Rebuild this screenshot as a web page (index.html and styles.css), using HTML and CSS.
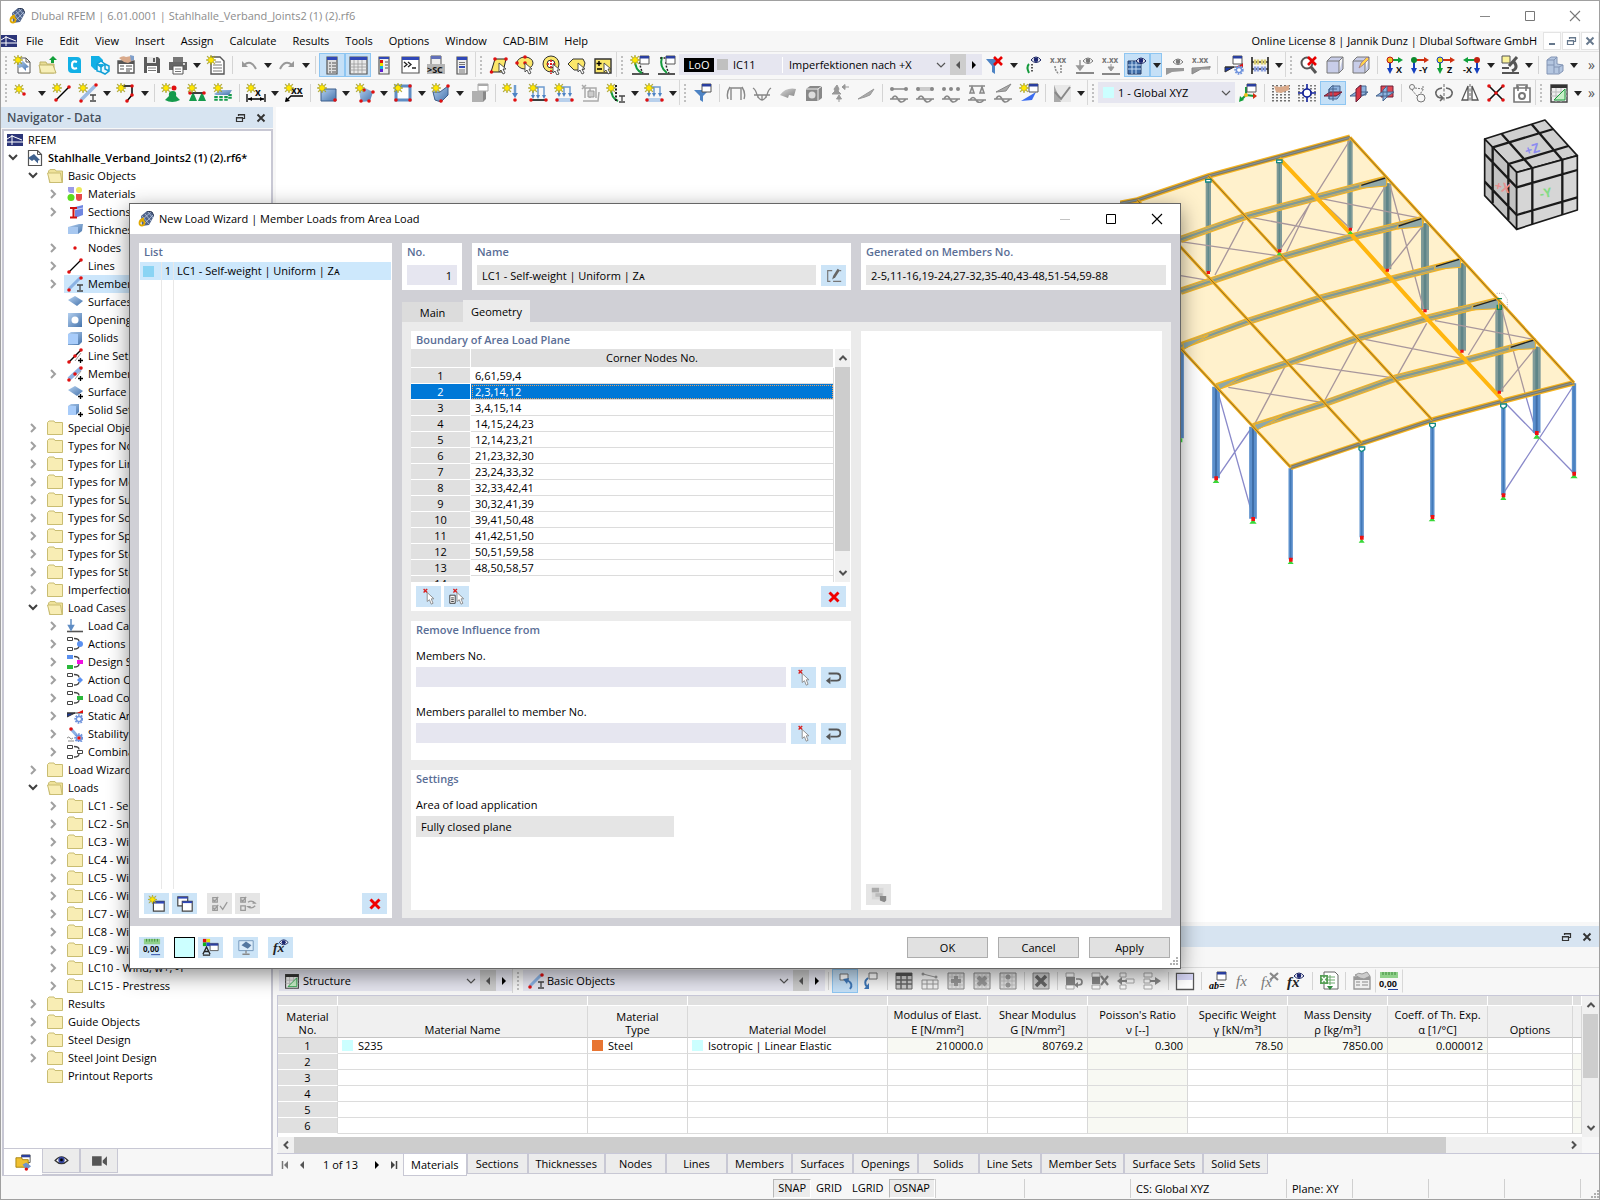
FILE: index.html
```html
<!DOCTYPE html>
<html lang="en">
<head>
<meta charset="utf-8">
<title>Dlubal RFEM</title>
<link rel="stylesheet" href="styles.css">
</head>
<body>
<svg class="sprite" aria-hidden="true">
<defs>
<linearGradient id="bl" x1="0" y1="0" x2="1" y2="1"><stop offset="0" stop-color="#b4d0f0"/><stop offset="1" stop-color="#4674ac"/></linearGradient>
<linearGradient id="gr" x1="0" y1="0" x2="1" y2="1"><stop offset="0" stop-color="#d8d8d8"/><stop offset="1" stop-color="#808080"/></linearGradient>
<g id="star"><path d="M5 0l1 3 3-2-2 3 3 1-3 1 2 3-3-2-1 3-1-3-3 2 2-3-3-1 3-1-2-3 3 2z" fill="#ffe600" stroke="#8f8a20" stroke-width=".5"/></g>
<circle id="dot" r="1.8" fill="#e01010"/>
<g id="win"><path d="M0 0h9v8H0z" fill="#fff" stroke="#555"/><path d="M0 0h9v2.500H0z" fill="#2a3f9e"/></g>
<g id="eye"><path d="M0 4q5-6 10 0q-5 5-10 0z" fill="#fff" stroke="#15205e"/><circle cx="5" cy="3.700" r="2.300" fill="#1b2570"/></g>
<g id="geye"><path d="M0 4q5-6 10 0q-5 5-10 0z" fill="#fff" stroke="#777"/><circle cx="5" cy="3.700" r="2.300" fill="#777"/></g>
<g id="cur"><path d="M0 0v9l2-2 2 4 2-1-2-4h3z" fill="#fff" stroke="#444" stroke-width=".9"/></g>
<g id="rx"><path d="M0 0l8 8M8 0l-8 8" stroke="#e80000" stroke-width="2.600"/></g>
<g id="ibeam"><path d="M0 0h6M3 0v5M0 6h6" stroke="#444" stroke-width="1.300"/></g>
<g id="gear"><circle r="3.600" fill="#fff" stroke="#6f93dc" stroke-width="2.200" stroke-dasharray="1.600 1"/><circle r="2.500" fill="none" stroke="#6f93dc" stroke-width="1.300"/></g>
<g id="plus"><path d="M2.500 0v5M0 2.500h5" stroke="#000" stroke-width="1.300"/></g>
</defs>
<symbol id="app" viewBox="0 0 16 16"><path d="M3 5l6-5 5 1 2 4-5 9-7 1z" fill="#50648c"/><path d="M4 5l7 8M7 3l6 7M10 1l5 6M4 9l9-8M6 13l9-9" stroke="#b8c6de" stroke-width=".8"/><path d="M9 0l5 1 2 4" stroke="#26324e" fill="none"/><path d="M6 7.500Q1.500 8.500 1.500 12a2.500 2.500 0 005 0 2.200 2.200 0 00-4.500-.5" fill="none" stroke="#e0a800" stroke-width="1.800"/></symbol>
<symbol id="rfem" viewBox="0 0 16 12"><path d="M0 0h16v12H0z" fill="#2b3478"/><path d="M0 8h16M5 1v10M0 5l5-3 10 4" stroke="#fff" fill="none"/></symbol>
<symbol id="chr" viewBox="0 0 16 16"><path d="M6 4l4 4-4 4" fill="none" stroke="#a0a0a0" stroke-width="2"/></symbol>
<symbol id="chd" viewBox="0 0 16 16"><path d="M4 5l4 4 4-4" fill="none" stroke="#404040" stroke-width="2"/></symbol>
<symbol id="thin" viewBox="0 0 10 10"><path d="M1 3l4 4 4-4" fill="none" stroke="#555" stroke-width="1.200"/></symbol>
<symbol id="up" viewBox="0 0 10 10"><path d="M1.500 7L5 3.500 8.500 7" fill="none" stroke="#505050" stroke-width="2"/></symbol>
<symbol id="dn" viewBox="0 0 10 10"><path d="M1.500 3L5 6.500 8.500 3" fill="none" stroke="#505050" stroke-width="2"/></symbol>
<symbol id="lf" viewBox="0 0 10 10"><path d="M7 1.500L3.500 5 7 8.500" fill="none" stroke="#505050" stroke-width="2"/></symbol>
<symbol id="rt" viewBox="0 0 10 10"><path d="M3 1.500L6.500 5 3 8.500" fill="none" stroke="#505050" stroke-width="2"/></symbol>
<symbol id="tl" viewBox="0 0 10 10"><path d="M7 1v8L3 5z" fill="#555"/></symbol>
<symbol id="tr" viewBox="0 0 10 10"><path d="M3 1v8l4-4z" fill="#000"/></symbol>
<symbol id="first" viewBox="0 0 10 10"><path d="M8 1v8L4 5z" fill="#777"/><path d="M2.500 1v8" stroke="#777" stroke-width="1.500"/></symbol>
<symbol id="last" viewBox="0 0 10 10"><path d="M2 1v8l4-4z" fill="#444"/><path d="M7.500 1v8" stroke="#444" stroke-width="1.500"/></symbol>
<symbol id="dd" viewBox="0 0 12 20"><path d="M2 8h8l-4 5z" fill="#222"/></symbol>
<symbol id="min" viewBox="0 0 12 12"><path d="M1 6.500h10" stroke="#888"/></symbol>
<symbol id="max" viewBox="0 0 12 12"><path d="M1.500 1.500h9v9h-9z" fill="none" stroke="currentColor"/></symbol>
<symbol id="cls" viewBox="0 0 12 12"><path d="M1 1l10 10M11 1L1 11" stroke="currentColor" stroke-width="1.100"/></symbol>
<symbol id="float" viewBox="0 0 12 12"><path d="M4.500 4V2.500h6v4H9M2.500 5.500h6v4h-6zM2.500 6h6M4.500 3h6" fill="none" stroke="currentColor" stroke-width="1.200"/></symbol>
<symbol id="bx" viewBox="0 0 12 12"><path d="M2.500 2.500l7 7M9.500 2.500l-7 7" stroke="currentColor" stroke-width="1.900"/></symbol>
<symbol id="bmin" viewBox="0 0 12 12"><path d="M3 9h6" stroke="currentColor" stroke-width="2"/></symbol>
<symbol id="grip" viewBox="0 0 10 10"><path d="M8 1h2v2H8zM5 4h2v2H5zM8 4h2v2H8zM2 7h2v2H2zM5 7h2v2H5zM8 7h2v2H8z" fill="#b0b0b0"/></symbol>
<!-- file and edit tools -->
<symbol id="new" viewBox="0 0 20 20"><path d="M6 3h8l4 4v11H6z" fill="#fff" stroke="#555"/><path d="M14 3v4h4" fill="none" stroke="#555"/><path d="M5 10l6-4 6 6-3 1v3l-4-4-3 1z" fill="url(#bl)"/><use href="#star" x="1" y="0"/></symbol>
<symbol id="open" viewBox="0 0 20 20"><path d="M2 7h6l1 2h7v9H2z" fill="#e8dc94" stroke="#bfb368"/><path d="M1 10h14l3 8H3z" fill="#f7efb8" stroke="#bfb368"/><path d="M13 8h3V5h3l-4-4-4 4h2z" fill="#11a03a"/></symbol>
<symbol id="cc" viewBox="0 0 20 20"><path d="M4 2h9q4 0 4 4v12H8q-4 0-4-4z" fill="#12b0e6"/><path d="M13 7q-5-2-5 3t5 3" fill="none" stroke="#fff" stroke-width="2.200"/></symbol>
<symbol id="hex" viewBox="0 0 20 20"><path d="M1 1h8l4 4v6l-4 4H5l-4-4z" fill="#12b0e6"/><path d="M7 9l4-3 4 3 4 2v5l-4 3-4-2-4-1zM7 9l4 3 4-3M11 12v5M15 9v5l4 2" fill="#e9f9ff" stroke="#12a0d6" stroke-width="1.500"/></symbol>
<symbol id="props" viewBox="0 0 20 20"><path d="M2 6h16v12H2z" fill="#fff" stroke="#555" stroke-width="1.400"/><path d="M2 6h16v3H2z" fill="#555"/><path d="M4 11h4M4 14h4M10 11h6M10 14h6M10 16h4" stroke="#888" stroke-width="1.500"/><path d="M3 3q4-3 7-1l5-1 3 4-6 3-4-1z" fill="#d9a98a"/><path d="M14 0l4 1v4l-3 1z" fill="#7fa0cc"/></symbol>
<symbol id="save" viewBox="0 0 20 20"><path d="M2 2h14l2 2v14H2z" fill="#5c5c5c"/><path d="M5 2h9v6H5z" fill="#e8e8e8"/><path d="M11 3h2v4h-2z" fill="#5c5c5c"/><path d="M5 11h10v7H5z" fill="#fff"/><path d="M6 13h8M6 15.500h8" stroke="#777"/></symbol>
<symbol id="print" viewBox="0 0 20 20"><path d="M5 2h10v5H5z" fill="#777"/><path d="M1 7h18v8H1z" fill="#666"/><path d="M5 11h10v8H5z" fill="#fff" stroke="#555"/><path d="M7 14h6M7 16.500h6" stroke="#777"/><circle cx="16" cy="9" r="1" fill="#fff"/></symbol>
<symbol id="doc" viewBox="0 0 20 20"><path d="M5 2h9l4 4v13H5z" fill="#fff" stroke="#555" stroke-width="1.400"/><path d="M9 7h6M7 10h9M7 13h9M7 16h9" stroke="#777"/><use href="#star"/></symbol>
<symbol id="undo" viewBox="0 0 20 20"><path d="M3 6v6h6z" fill="#999"/><path d="M5 10q7-6 12 4" fill="none" stroke="#999" stroke-width="2"/></symbol>
<symbol id="redo" viewBox="0 0 20 20"><path d="M17 6v6h-6z" fill="#999"/><path d="M15 10q-7-6-12 4" fill="none" stroke="#999" stroke-width="2"/></symbol>
<symbol id="nav" viewBox="0 0 20 20"><path d="M5 2h10v17H5z" fill="#ddd" stroke="#555" stroke-width="1.200"/><path d="M5 2h10v3H5z" fill="#3048b8"/><path d="M7 8h2M10 8h4M7 11h2M10 11h4M7 14h2M10 14h4M7 17h2M10 17h4" stroke="#555"/></symbol>
<symbol id="grid" viewBox="0 0 20 20"><path d="M2 2h17v17H2z" fill="#e9e9e9" stroke="#555" stroke-width="1.200"/><path d="M2 2h17v3H2z" fill="#3048b8"/><path d="M2 9h17M2 12h17M2 15h17M6 5v14M10 5v14M14 5v14" stroke="#999" stroke-width=".8"/></symbol>
<symbol id="colors" viewBox="0 0 20 20"><path d="M5 2h10v17H5z" fill="#eee" stroke="#555" stroke-width="1.200"/><path d="M5 2h10v2H5z" fill="#3048b8"/><path d="M6 5h3v3H6z" fill="#e01010"/><path d="M6 8h3v3H6z" fill="#e8e000"/><path d="M6 11h3v3H6z" fill="#10b0e0"/><path d="M6 14h3v3H6z" fill="#6020d0"/><path d="M11 7h3M11 10h3M11 13h3" stroke="#555"/></symbol>
<symbol id="cons" viewBox="0 0 20 20"><path d="M2 2h17v16H2z" fill="#fff" stroke="#555" stroke-width="1.200"/><path d="M2 2h17v3H2z" fill="#3048b8"/><path d="M4 7l3 2.500L4 12M8 7l3 2.500L8 12M12 13h4" fill="none" stroke="#222" stroke-width="1.300"/></symbol>
<symbol id="sc" viewBox="0 0 20 20"><path d="M5 1h10v11H5z" fill="#eee" stroke="#555"/><path d="M5 1h10v3H5z" fill="#6270b8"/><rect x="1" y="9" width="18" height="10" fill="#b4b4b4"/><text x="1" y="18" font-size="9" class="bt">&gt;SC</text></symbol>
<symbol id="list" viewBox="0 0 20 20"><path d="M5 2h10v17H5z" fill="#eee" stroke="#555" stroke-width="1.200"/><path d="M5 2h10v3H5zM7 11h6v2H7z" fill="#3048b8"/><path d="M7 7.500h6M7 9.500h6M7 15h6M7 17h6" stroke="#777"/></symbol>
<!-- selection tools -->
<symbol id="s1" viewBox="0 0 20 20"><path d="M6 4h11l-3 13H2z" fill="#fbe76a" stroke="#222"/><use href="#dot" x="6" y="4"/><use href="#dot" x="17" y="4"/><use href="#dot" x="2.500" y="17"/><use href="#cur" x="10" y="8"/></symbol>
<symbol id="s2" viewBox="0 0 20 20"><ellipse cx="10" cy="8" rx="8" ry="6" fill="#fbe76a" stroke="#333"/><use href="#dot" x="10" y="2"/><use href="#dot" x="2" y="8"/><use href="#dot" x="10" y="8"/><use href="#cur" x="10" y="8"/></symbol>
<symbol id="s3" viewBox="0 0 20 20"><circle cx="10" cy="9" r="8" fill="#fbe76a" stroke="#333"/><circle cx="10" cy="9" r="4" fill="#fff" stroke="#333"/><path d="M10 5v8M6 9h8M10 15v4" stroke="#e01010" stroke-width="1.600" stroke-dasharray="2 1"/><use href="#cur" x="12" y="9"/></symbol>
<symbol id="s4" viewBox="0 0 20 20"><path d="M6 4h10l2 4-2 7H7l-6-6z" fill="#fbe76a" stroke="#333"/><use href="#cur" x="11" y="8"/></symbol>
<symbol id="s5" viewBox="0 0 20 20"><path d="M2 4h16v14H2z" fill="#fbe76a" stroke="#333" stroke-width="1.400"/><path d="M6 6v5M3.500 8.500h5M4 14h5" stroke="#000" stroke-width="1.400"/><use href="#cur" x="11" y="8"/></symbol>
<symbol id="ld1" viewBox="0 0 20 20"><path d="M2 19h17" stroke="#555" stroke-width="2"/><path d="M5 5q0 10 7 13" fill="none" stroke="#159a3c" stroke-width="2"/><path d="M10 7q0 6 3 11" fill="none" stroke="#222" stroke-dasharray="2 1.500" stroke-width="1.500"/><use href="#win" x="10" y="1"/><use href="#star"/></symbol>
<symbol id="ld2" viewBox="0 0 20 20"><path d="M2 19h17" stroke="#555" stroke-width="2"/><path d="M6 2q-3 10 5 16" fill="none" stroke="#159a3c" stroke-width="2"/><path d="M10 7q0 6 3 11M4 3h6" fill="none" stroke="#222" stroke-dasharray="2 1.500" stroke-width="1.500"/><use href="#win" x="10" y="1"/></symbol>
<symbol id="filx" viewBox="0 0 20 20"><path d="M1 4h15l-6 7v8l-3-2v-6z" fill="#4d83c4"/><use href="#rx" x="9" y="2"/></symbol>
<symbol id="gef" viewBox="0 0 20 20"><path d="M6 9q-3 3 0 9" fill="none" stroke="#159a3c" stroke-width="2"/><path d="M9 9v9" stroke="#222" stroke-dasharray="1.500 1.500" stroke-width="1.500"/><use href="#eye" x="8" y="1"/></symbol>
<symbol id="xg" viewBox="0 0 20 20"><text x="1" y="8" font-size="8" class="gt">x.xx</text><path d="M6 11q0 5 4 8M12 10v9" fill="none" stroke="#888" stroke-dasharray="2 1" stroke-width="1.500"/></symbol>
<symbol id="ea" viewBox="0 0 20 20"><path d="M1 18h18" stroke="#888" stroke-width="2"/><path d="M5 5v8M2 11l3 4 3-4z" stroke="#999" fill="#999" stroke-width="1.500"/><use href="#geye" x="8" y="2"/></symbol>
<symbol id="xa" viewBox="0 0 20 20"><text x="1" y="8" font-size="8" class="gt">x.xx</text><path d="M1 19h18" stroke="#888" stroke-width="2"/><path d="M10 9v5M7 12l3 4 3-4z" stroke="#999" fill="#999"/></symbol>
<symbol id="mesh" viewBox="0 0 20 20"><path d="M1 6h13v13H1z" fill="#3f6da8" stroke="#2a3f66"/><path d="M1 10h13M1 14h13M5 6v13M9 6v13" stroke="#c4dcf4"/><use href="#eye" x="9" y="2"/></symbol>
<symbol id="ew" viewBox="0 0 20 20"><path d="M1 13h18v3l-12 1-6 3z" fill="#999"/><use href="#geye" x="8" y="3"/></symbol>
<symbol id="xw" viewBox="0 0 20 20"><text x="1" y="8" font-size="8" class="gt">x.xx</text><path d="M1 13h18v-2M1 13v6l9-5h9" fill="#999" stroke="#888"/></symbol>
<symbol id="rd" viewBox="0 0 20 20"><path d="M1 12h18M1 12v5l9-5z" fill="#1c3aa8" stroke="#333"/><path d="M12 12l7-4v4z" fill="#e01010"/><use href="#win" x="9" y="1"/><use href="#gear" x="15" y="15"/></symbol>
<symbol id="abac" viewBox="0 0 20 20"><path d="M2 2v17M18 2v17M2 7h16M2 14h16" stroke="#222" stroke-width="1.600"/><path d="M5 4.500v5M8 4.500v5M12 4.500v5M15 4.500v5" stroke="#d8cc70" stroke-width="2.400"/><path d="M5 11.500v5M8 11.500v5M12 11.500v5M15 11.500v5" stroke="#8ca0e0" stroke-width="2.400"/></symbol>
<!-- view tools -->
<symbol id="magx" viewBox="0 0 20 20"><circle cx="8" cy="8" r="5.500" fill="#fff" stroke="#555" stroke-width="2"/><path d="M12 12l5 6" stroke="#555" stroke-width="3"/><use href="#rx" x="9" y="2"/></symbol>
<symbol id="cube" viewBox="0 0 20 20"><path d="M2 6h12v12H2zM2 6l4-4h12l-4 4M14 18l4-4V2" fill="#c8cde8" stroke="#777"/></symbol>
<symbol id="cubep" viewBox="0 0 20 20"><path d="M2 6h12v12H2zM2 6l4-4h12l-4 4M14 18l4-4V2" fill="#c8cde8" stroke="#777"/><path d="M8 13l2-5 6-6 2 2-6 6z" fill="#ffd24a" stroke="#a88"/></symbol>
<symbol id="vx" viewBox="0 0 20 20"><path d="M6 5v9" stroke="#1540c0" stroke-width="2"/><path d="M3 13h6l-3 6z" fill="#1540c0"/><path d="M8 5h6" stroke="#11a03a" stroke-width="2"/><path d="M14 2v6l5-3z" fill="#11a03a"/><circle cx="6" cy="5" r="3" fill="#f0c020" stroke="#c01010"/><text x="12" y="18" font-size="9" class="bt">X</text></symbol>
<symbol id="vy" viewBox="0 0 20 20"><path d="M4 5v9" stroke="#1540c0" stroke-width="2"/><path d="M1 13h6l-3 6z" fill="#1540c0"/><path d="M6 5h8" stroke="#d03010" stroke-width="2"/><path d="M14 2v6l5-3z" fill="#d03010"/><circle cx="4" cy="5" r="3" fill="#0d8a2e"/><text x="9" y="18" font-size="9" class="bt">-Y</text></symbol>
<symbol id="vz" viewBox="0 0 20 20"><path d="M4 5v9" stroke="#11a03a" stroke-width="2"/><path d="M1 13h6l-3 6z" fill="#11a03a"/><path d="M6 5h8" stroke="#d03010" stroke-width="2"/><path d="M14 2v6l5-3z" fill="#d03010"/><circle cx="4" cy="5" r="3" fill="#f0e020" stroke="#1540c0"/><text x="11" y="18" font-size="9" class="bt">Z</text></symbol>
<symbol id="vmx" viewBox="0 0 20 20"><path d="M15 5v9" stroke="#1540c0" stroke-width="2"/><path d="M12 13h6l-3 6z" fill="#1540c0"/><path d="M6 5h8" stroke="#11a03a" stroke-width="2"/><path d="M6 2v6L1 5z" fill="#11a03a"/><circle cx="15" cy="5" r="3" fill="#c02010"/><text x="1" y="18" font-size="9" class="bt">-X</text></symbol>
<symbol id="micro" viewBox="0 0 20 20"><path d="M2 1h8v7H2z" fill="#fbf39a" stroke="#555"/><path d="M17 2l-8 9M14 7q5 6-2 9" stroke="#555" stroke-width="3" fill="none"/><path d="M2 12h7v2H2zM2 17h17v2H2z" fill="#555"/></symbol>
<symbol id="cubes" viewBox="0 0 20 20"><path d="M2 5l4-3h6v7l6 1v6l-4 3H2z" fill="#b4c6e0" stroke="#8294b4"/><path d="M2 10h7v8M2 5h7l3-3M9 5v5M14 12v6M9 12h5l4-2" fill="none" stroke="#8294b4"/></symbol>
<!-- modelling tools -->
<symbol id="node" viewBox="0 0 20 20"><use href="#star" x="2" y="1"/><use href="#dot" x="12" y="11"/></symbol>
<symbol id="line" viewBox="0 0 20 20"><path d="M4 17L17 4" stroke="#000" stroke-width="1.500"/><use href="#dot" x="4" y="17"/><use href="#dot" x="17" y="4"/><use href="#star"/></symbol>
<symbol id="member" viewBox="0 0 20 20"><path d="M3 17L17 3" stroke="#9cbce4" stroke-width="3.500"/><use href="#dot" x="3" y="18"/><use href="#dot" x="18" y="2"/><use href="#ibeam" x="12" y="12"/><use href="#star"/></symbol>
<symbol id="poly" viewBox="0 0 20 20"><path d="M6 3h10v9l-5 6" fill="none" stroke="#000" stroke-width="1.500"/><use href="#dot" x="16" y="3"/><use href="#dot" x="16" y="12"/><use href="#dot" x="11" y="18"/><use href="#star"/></symbol>
<symbol id="sup" viewBox="0 0 20 20"><path d="M12 8q4 0 3 5l4 4q-8 4-15 0l4-4q-1-5 4-5z" fill="#159a4c"/><circle cx="13" cy="5" r="2.500" fill="#e01010"/><use href="#star"/></symbol>
<symbol id="sup2" viewBox="0 0 20 20"><path d="M2 10h16" stroke="#000" stroke-width="1.500"/><path d="M5 11h2l3 7H2zM14 11h2l3 7h-8z" fill="#159a4c"/><use href="#dot" x="3" y="10"/><use href="#dot" x="17" y="10"/><use href="#star"/></symbol>
<symbol id="sup3" viewBox="0 0 20 20"><path d="M3 13v5M8 13v5M13 13v5M17 11v5" stroke="#159a4c" stroke-width="3.500" stroke-dasharray="2 .8"/><path d="M1 11l6-4h12l-3 5H3z" fill="url(#bl)"/><use href="#star"/></symbol>
<symbol id="dimx" viewBox="0 0 20 20"><path d="M1 11v8M19 11v8M2 16h16" stroke="#000" stroke-width="1.300"/><path d="M2 16l4-2v4zM18 16l-4-2v4z"/><text x="9" y="13" font-size="10" class="bt">x</text><use href="#star"/></symbol>
<symbol id="dimxx" viewBox="0 0 20 20"><path d="M2 18l5-5h12" stroke="#000" stroke-width="1.300" fill="none"/><path d="M1 19l1-5 4 4z"/><text x="7" y="11" font-size="10" class="bt">xx</text><use href="#star"/></symbol>
<symbol id="surf" viewBox="0 0 20 20"><path d="M4 6h15v12H4z" fill="url(#bl)" stroke="#3d5f8c"/><use href="#dot" x="18" y="17"/><use href="#star"/></symbol>
<symbol id="surf2" viewBox="0 0 20 20"><path d="M4 8l6-3 8 4-3 9-9 1z" fill="url(#bl)"/><use href="#dot" x="9" y="7"/><use href="#dot" x="18" y="9"/><use href="#dot" x="6" y="18"/><use href="#dot" x="14" y="18"/><use href="#star"/></symbol>
<symbol id="opn" viewBox="0 0 20 20"><path d="M3 3h14v14H3z" fill="#fff" stroke="#5f8dc4" stroke-width="3"/><use href="#dot" x="17" y="3"/><use href="#dot" x="3" y="17"/><use href="#dot" x="17" y="17"/><use href="#star"/></symbol>
<symbol id="sol" viewBox="0 0 20 20"><path d="M2 9h7l8-6v9l-7 7-6-2z" fill="url(#bl)" stroke="#3d5f8c"/><use href="#dot" x="17" y="3"/><use href="#dot" x="10" y="18"/><use href="#star"/></symbol>
<symbol id="gbox" viewBox="0 0 20 20"><path d="M3 8h11v11H3z" fill="#b0b0b0"/><path d="M14 8l3-3v11l-3 3z" fill="#888"/><path d="M9 1h10v7H9z" fill="#fff" stroke="#aaa"/><path d="M9 1h10v2H9z" fill="#aaa"/></symbol>
<symbol id="nl" viewBox="0 0 20 20"><path d="M13 2v9" stroke="#6f9cd0" stroke-width="2.500"/><path d="M10 10h6l-3 5z" fill="#4d83c4"/><use href="#dot" x="13" y="17"/><use href="#star"/></symbol>
<symbol id="ll" viewBox="0 0 20 20"><path d="M3 17h15" stroke="#000" stroke-width="1.500"/><path d="M5 14V4h11v10M10 4v10" stroke="#6f9cd0" fill="none" stroke-width="1.500"/><path d="M3 12h4l-2 4zM8 12h4l-2 4zM14 12h4l-2 4z" fill="#4d83c4"/><use href="#dot" x="3" y="17"/><use href="#dot" x="18" y="17"/><use href="#star"/></symbol>
<symbol id="al" viewBox="0 0 20 20"><path d="M2 15h16v4H2z" fill="#b8d0ec"/><path d="M5 12V4h11v8M10 4v8" stroke="#6f9cd0" fill="none" stroke-width="1.500"/><path d="M3 10h4l-2 4zM8 10h4l-2 4zM14 10h4l-2 4z" fill="#4d83c4"/><use href="#dot" x="3" y="17"/><use href="#dot" x="18" y="17"/><use href="#star"/></symbol>
<symbol id="gl" viewBox="0 0 20 20"><path d="M3 18h15l1-9M5 15V5h11v10M10 5v10M2 2l4 4M6 2L2 6" stroke="#aaa" fill="none" stroke-width="1.500"/><path d="M8 8h6v6H8z" fill="#ccc" stroke="#999"/></symbol>
<symbol id="imp" viewBox="0 0 20 20"><path d="M5 5q0 10 7 13" fill="none" stroke="#159a3c" stroke-width="2"/><path d="M10 2v16" stroke="#222" stroke-dasharray="2 1.500" stroke-width="2"/><use href="#ibeam" x="13" y="13"/><use href="#star"/></symbol>
<symbol id="fil" viewBox="0 0 20 20"><path d="M1 7h15l-6 6v6l-3-2v-4z" fill="#4d83c4"/><use href="#win" x="9" y="1"/></symbol>
<!-- results tools -->
<symbol id="g1" viewBox="0 0 20 20"><path d="M5 17V5h10v12M2 16q-2-6 2-12M16 4q4 6 2 12" fill="none" stroke="#888" stroke-width="1.400"/></symbol>
<symbol id="g2" viewBox="0 0 20 20"><path d="M1 5q3 2 4 7M19 5q-3 2-4 7M2 12h16M5 12q5 10 10 0M6 12v3M10 12v5M14 12v3" fill="none" stroke="#888" stroke-width="1.300"/></symbol>
<symbol id="g3" viewBox="0 0 20 20"><path d="M2 12q6-8 16-6l-2 7-5-1-1 3z" fill="url(#gr)"/></symbol>
<symbol id="g4" viewBox="0 0 20 20"><path d="M2 6l4-3h12v12l-4 3H2z" fill="#888"/><path d="M2 6h12v12M14 6l4-3" fill="none" stroke="#eee"/><circle cx="8" cy="12" r="3.500" fill="#ddd"/></symbol>
<symbol id="g5" viewBox="0 0 20 20"><path d="M7 2l2 4-1 2 3 3H2l3-3-1-2zM12 4h7M12 4l3-2.500v5zM9 19v-5M9 12l-2.500 4h5z" fill="#999" stroke="#999"/></symbol>
<symbol id="g6" viewBox="0 0 20 20"><path d="M2 16L18 6l-4 6-5 2z" fill="#aaa" stroke="#999"/></symbol>
<symbol id="w1" viewBox="0 0 20 20"><path d="M2 6h16M1 16h18M3 16q3-6 6 0t8 0" fill="none" stroke="#888" stroke-width="1.700"/><circle cx="3" cy="6" r="2" fill="#888"/><circle cx="17" cy="6" r="2" fill="#888"/></symbol>
<symbol id="w2" viewBox="0 0 20 20"><path d="M2 6h16" stroke="#ccc" stroke-width="4"/><path d="M1 16h18M3 16q3-6 6 0t8 0" fill="none" stroke="#888" stroke-width="1.700"/><circle cx="3" cy="6" r="2" fill="#888"/><circle cx="17" cy="6" r="2" fill="#888"/></symbol>
<symbol id="w3" viewBox="0 0 20 20"><path d="M1 16h18M3 16q3-6 6 0t8 0" fill="none" stroke="#888" stroke-width="1.700"/><circle cx="3" cy="6" r="2" fill="#888"/><circle cx="10" cy="6" r="2" fill="#888"/><circle cx="17" cy="6" r="2" fill="#888"/></symbol>
<symbol id="w4" viewBox="0 0 20 20"><path d="M2 3h16M1 17h18M3 17q3-5 6 0t8 0M3 10l2-6 2 6zM13 10l2-6 2 6z" fill="none" stroke="#888" stroke-width="1.600"/></symbol>
<symbol id="w5" viewBox="0 0 20 20"><path d="M3 9L18 1l-5 7z" fill="#aaa" stroke="#888"/><path d="M1 16h18M3 16q3-6 6 0t8 0" fill="none" stroke="#888" stroke-width="1.700"/></symbol>
<symbol id="w6" viewBox="0 0 20 20"><path d="M2 18l15-9-4 8z" fill="#3a6cf0"/><use href="#win" x="10" y="1"/><use href="#star"/></symbol>
<symbol id="g7" viewBox="0 0 20 20"><path d="M2 2h17v17H2z" fill="#e8e8e8"/><path d="M2 2l7 17H2z" fill="#aaa"/><path d="M3 9l6 7L18 4" fill="none" stroke="#888" stroke-width="2"/></symbol>
<symbol id="cs" viewBox="0 0 20 20"><path d="M8 12V4M8 12l8 1M8 12l-5 5" stroke="#159a3c" stroke-width="2"/><path d="M15 10v6l4-3z" fill="#d03010"/><path d="M1 19l1-6 4 4z" fill="#11a03a"/><circle cx="8" cy="12" r="2" fill="#f0c020"/><use href="#win" x="9" y="1"/></symbol>
<symbol id="gs1" viewBox="0 0 20 20"><path d="M2 2v17M6 2v17M10 2v17M14 2v17M18 2v17" stroke="#444" stroke-width="1.500" stroke-dasharray="1.500 1.500"/><path d="M3 3l6 1 9-2v5l-8 3-5-1z" fill="#d9a98a"/></symbol>
<symbol id="gs2" viewBox="0 0 20 20"><path d="M2 2v17M6 2v17M14 2v17M18 2v17" stroke="#555" stroke-width="1.500" stroke-dasharray="1.500 1.500"/><path d="M10 1v18M1 10h18" stroke="#10209a" stroke-width="1.600"/><circle cx="10" cy="10" r="4" fill="#fff" stroke="#10209a" stroke-width="1.600"/></symbol>
<symbol id="p1" viewBox="0 0 20 20"><path d="M6 6l3-3h8v9l-3 4H6z" fill="#8fb4e0" stroke="#46648e"/><path d="M1 13l6-4h12l-6 4z" fill="#d83848" stroke="#6a2038"/><path d="M10 2v16M6 16V6h8" stroke="#46648e" fill="none"/></symbol>
<symbol id="p2" viewBox="0 0 20 20"><path d="M1 13l6-4h12l-6 4zM10 3h7v9h-7z" fill="#8fb4e0" stroke="#46648e"/><path d="M7 6l5-4v12l-5 5z" fill="#d83848" stroke="#6a2038"/></symbol>
<symbol id="p3" viewBox="0 0 20 20"><path d="M6 3h12v11H6z" fill="#e04854" stroke="#6a2038"/><path d="M1 13l6-4h12l-6 4zM8 7l4-4v11l-4 4z" fill="#8fb4e0" stroke="#46648e"/></symbol>
<symbol id="o1" viewBox="0 0 20 20"><circle cx="4" cy="4" r="2.500" fill="none" stroke="#777"/><circle cx="13" cy="15" r="4" fill="none" stroke="#777"/><path d="M7 5l8 1M15 3v4l-3 4M4 7l5 6" stroke="#777" fill="none" stroke-dasharray="2 1"/></symbol>
<symbol id="o2" viewBox="0 0 20 20"><path d="M10 1v18" stroke="#666" stroke-dasharray="3 1.500"/><path d="M8 5q-7 1-6 6 1 4 6 4M12 5q7 1 6 6-1 4-6 4M6 12l3 3-3 3" fill="none" stroke="#666" stroke-width="1.600"/></symbol>
<symbol id="o3" viewBox="0 0 20 20"><path d="M10 1v18" stroke="#666" stroke-dasharray="3 1.500"/><path d="M8 3v14H2zM12 3v14h6z" fill="#fff" stroke="#555" stroke-width="1.300"/></symbol>
<symbol id="o4" viewBox="0 0 20 20"><path d="M3 3l14 14M17 3L3 17" stroke="#111" stroke-width="1.600"/><use href="#dot" x="3" y="3"/><use href="#dot" x="17" y="3"/><use href="#dot" x="10" y="10"/><use href="#dot" x="3" y="17"/><use href="#dot" x="17" y="17"/></symbol>
<symbol id="o5" viewBox="0 0 20 20"><path d="M2 5h16v14H2zM5 5V2h10v3M6 3v5M14 3v5" fill="#fff" stroke="#777" stroke-width="1.600"/><circle cx="10" cy="13" r="3" fill="#fff" stroke="#777" stroke-width="2"/></symbol>
<symbol id="tri" viewBox="0 0 20 20"><path d="M2 2h16v17H2z" fill="#eee" stroke="#444" stroke-width="1.400"/><path d="M2 2h16v3H2z" fill="#333"/><path d="M2 9h16M2 13h16M7 5v14M12 5v14" stroke="#bbb"/><path d="M16 6v11H5z" fill="#c8f0c8" stroke="#1b9a3c"/></symbol>
<!-- tree icons -->
<symbol id="fo" viewBox="0 0 16 16"><path d="M.5 2.500L2 1h5l1 1.500h7.500v12H.5z" fill="#f8edb4" stroke="#c9bd72"/></symbol>
<symbol id="foo" viewBox="0 0 16 16"><path d="M1.500 3L3 1.500h5L9 3h6.500v11.500h-13z" fill="#efe29a" stroke="#c9bd72"/><path d="M.5 5h13l1.500 9.500H3z" fill="#f8edb4" stroke="#c9bd72"/></symbol>
<symbol id="file" viewBox="0 0 16 16"><path d="M1.500.5h9l4 4v11h-13z" fill="#fff" stroke="#555" stroke-width="1.200"/><path d="M10.500.5v4h4" fill="none" stroke="#555"/><path d="M1 8l6-4 6 6-2 .5v3l-4-4-2 1.500z" fill="#3f628f"/></symbol>
<symbol id="mat" viewBox="0 0 16 16"><path d="M1 1h6v6H4a3 3 0 01-3-3z" fill="#9c9ce8"/><circle cx="12" cy="4" r="3" fill="#ece85c"/><circle cx="4" cy="11.500" r="3.500" fill="#5ddc1c"/><path d="M9 8h6v4a3 3 0 01-6 0z" fill="#e84848"/></symbol>
<symbol id="sec" viewBox="0 0 16 16"><path d="M8 3l8-2v10l-8 3z" fill="#6f86e0"/><path d="M7 6l9-2" stroke="#ccd4f8"/><path d="M3 4h7M6.500 4v9M3 13.500h7" stroke="#d01010" stroke-width="2"/></symbol>
<symbol id="thk" viewBox="0 0 16 16"><path d="M1 5l11-3h4l-1 7-4 3H1z" fill="url(#bl)"/><path d="M1 5h10v7H1z" fill="#a8c8f0"/></symbol>
<symbol id="nd" viewBox="0 0 16 16"><circle cx="8" cy="8" r="1.700" fill="#e01010"/></symbol>
<symbol id="ln" viewBox="0 0 16 16"><path d="M2 14L14 2" stroke="#000" stroke-width="1.300"/><use href="#dot" x="2" y="14"/><use href="#dot" x="14" y="2"/></symbol>
<symbol id="mb" viewBox="0 0 16 16"><path d="M2 13L13 2" stroke="#8ab2e4" stroke-width="3"/><use href="#dot" x="2" y="14"/><use href="#dot" x="14" y="2"/><use href="#ibeam" x="10" y="9"/></symbol>
<symbol id="sf" viewBox="0 0 16 16"><path d="M1 6l7-4 8 5-6 5z" fill="url(#bl)"/></symbol>
<symbol id="op" viewBox="0 0 16 16"><path d="M1 1h14v14H1z" fill="url(#bl)"/><circle cx="8" cy="8" r="3.500" fill="#fff"/></symbol>
<symbol id="sd" viewBox="0 0 16 16"><path d="M1 4l3-2h11v10l-3 3H1z" fill="url(#bl)"/><path d="M1 4h10v10H1z" fill="#a8ccfa"/></symbol>
<symbol id="ls" viewBox="0 0 16 16"><path d="M2 14L14 2" stroke="#000" stroke-width="1.500"/><path d="M8 13l6-8" stroke="#999"/><use href="#dot" x="2" y="14"/><use href="#dot" x="8" y="8"/><use href="#dot" x="14" y="2"/><use href="#plus" x="11" y="10"/></symbol>
<symbol id="ms" viewBox="0 0 16 16"><path d="M2 13L14 2" stroke="#8cb0e4" stroke-width="4"/><path d="M8 13l6-8" stroke="#999"/><use href="#dot" x="2" y="14"/><use href="#dot" x="8" y="8"/><use href="#dot" x="14" y="2"/><use href="#plus" x="11" y="10"/></symbol>
<symbol id="ss" viewBox="0 0 16 16"><path d="M1 6l7-4 8 5-6 5z" fill="url(#bl)"/><use href="#plus" x="11" y="10"/></symbol>
<symbol id="sds" viewBox="0 0 16 16"><path d="M1 4l3-2h8v8l-3 3H1z" fill="url(#bl)"/><path d="M1 4h8v9H1z" fill="#a8ccfa"/><use href="#plus" x="11" y="10"/></symbol>
<symbol id="lc" viewBox="0 0 16 16"><path d="M0 13.500h16" stroke="#555" stroke-width="1.600"/><path d="M4 1v8M1.500 7.500L4 12l2.500-4.500z" stroke="#5f8dc4" fill="#5f8dc4" stroke-width="1.500"/></symbol>
<g id="cb"><path d="M.5 1.500h5v3h-5zM.5 11.500h5v3h-5z" fill="#fff" stroke="#444"/><path d="M7 2.500q5 0 5 3M7 13q5 0 5-3" fill="none" stroke="#444" stroke-width="1.300"/></g>
<symbol id="ac" viewBox="0 0 16 16"><use href="#cb"/><circle cx="13" cy="8" r="3" fill="#5a90f0"/></symbol>
<symbol id="ds" viewBox="0 0 16 16"><use href="#cb"/><path d="M0 1h6v4H0z" fill="#5a90f0"/><path d="M0 11h6v4H0z" fill="#2ab83a"/><path d="M10 6h6v4h-6z" fill="#f010e0"/></symbol>
<symbol id="acc" viewBox="0 0 16 16"><use href="#cb"/><path d="M13 5l3 3-3 3-3-3z" fill="#5a90f0"/></symbol>
<symbol id="loc" viewBox="0 0 16 16"><use href="#cb"/><path d="M10 6h6v4h-6z" fill="#2ab83a"/></symbol>
<symbol id="cmb" viewBox="0 0 16 16"><use href="#cb"/><path d="M10.500 6.500h5v3h-5z" fill="#fff" stroke="#444"/></symbol>
<symbol id="sta" viewBox="0 0 16 16"><path d="M0 5h16M0 5v4l8-4z" fill="#1c3a98" stroke="#333"/><path d="M10 5l6-3v3z" fill="#e01010"/><use href="#gear" x="12" y="11"/></symbol>
<symbol id="stb" viewBox="0 0 16 16"><path d="M4 3l8 9" stroke="#8cb0e4" stroke-width="3"/><path d="M0 12q2-2 3 0t3 0M1 15h6" stroke="#888" fill="none"/><use href="#gear" x="12" y="12"/><use href="#dot" x="4" y="3"/><use href="#dot" x="12" y="12"/></symbol>
<symbol id="t1" viewBox="0 0 18 18"><use href="#win" x="7" y="1"/><path d="M1 4h6l1 2h6v8H1z" fill="#f0c030" stroke="#a88410"/><path d="M8 11l4-2 5 4-5 4z" fill="#6f93cc"/><use href="#dot" x="12" y="16"/></symbol>
<symbol id="t2" viewBox="0 0 16 16"><path d="M2 8q6-7 12 0-6 6-12 0z" fill="#fff" stroke="#333" stroke-width="1.200"/><circle cx="8" cy="7.500" r="3" fill="#34449c"/><circle cx="8" cy="7.500" r="1.300" fill="#000"/></symbol>
<symbol id="t3" viewBox="0 0 16 16"><path d="M1 4h9v9H1zM11 8l4-4v9l-4-3z" fill="#555"/></symbol>
<!-- dialog tools -->
<symbol id="dn1" viewBox="0 0 20 20"><path d="M6 7h12v11H6z" fill="#fff" stroke="#444" stroke-width="1.300"/><path d="M6 7h12v2.500H6z" fill="#3048b8"/><use href="#star"/></symbol>
<symbol id="dn2" viewBox="0 0 20 20"><path d="M2 2h11v10H2z" fill="#fff" stroke="#444" stroke-width="1.300"/><path d="M2 2h11v2H2z" fill="#3048b8"/><path d="M7 7h11v11H7z" fill="#fff" stroke="#444" stroke-width="1.300"/><path d="M7 7h11v2H7z" fill="#3048b8"/></symbol>
<symbol id="dc1" viewBox="0 0 20 20"><path d="M2 3h5v5H2zM2 12h5v5H2zM3 5l1 2 4-5M3 14l1 2 4-5M10 12l3 4 5-8" fill="none" stroke="#999" stroke-width="1.400"/></symbol>
<symbol id="dc2" viewBox="0 0 20 20"><path d="M2 3h5v5H2zM2 12h5v5H2zM3 5l1 2 4-5M10 8q4-3 8 1l-3 0M18 12q-4 4-8 1l3 0" fill="none" stroke="#999" stroke-width="1.400"/></symbol>
<symbol id="del" viewBox="0 0 20 20"><path d="M5 5l10 10M15 5L5 15" stroke="#f00000" stroke-width="3.200"/></symbol>
<symbol id="unit" viewBox="0 0 20 20"><path d="M1 1h18v6H1z" fill="#8fd08a"/><path d="M4 1v3M7 1v3M10 1v3M13 1v3M16 1v3" stroke="#3a8a3a"/><text x="0" y="16" font-size="9" class="bt">0,00</text><path d="M9 18.500h10" stroke="#2040a0"/></symbol>
<symbol id="clr" viewBox="0 0 20 20"><path d="M1 1h4v4H1z" fill="#e01010"/><path d="M5 1h4v4H5z" fill="#e8e000"/><path d="M1 5h4v4H1z" fill="#10b020"/><path d="M5 5h4v4H5z" fill="#2040d0"/><path d="M1 18l4-8 4 8M3 15h5M1 19h8" stroke="#222" stroke-width="1.500" fill="none"/><use href="#win" x="9" y="6"/></symbol>
<symbol id="mon" viewBox="0 0 20 20"><path d="M2 3h16v11H2z" fill="#dcecfa" stroke="#6f93b8"/><path d="M5 8l5-4 6 4-4 4z" fill="#5577a0"/><path d="M10 14v3M6 18h8" stroke="#888" stroke-width="1.500"/></symbol>
<symbol id="fxe" viewBox="0 0 20 20"><text x="1" y="16" font-size="15" class="fx">fx</text><use href="#eye" x="8" y="1"/></symbol>
<symbol id="fx" viewBox="0 0 20 20"><text x="2" y="15" font-size="15" class="fx gy">fx</text></symbol>
<symbol id="fxx" viewBox="0 0 20 20"><text x="1" y="16" font-size="15" class="fx gy">fx</text><path d="M10 2l8 7M18 2l-8 7" stroke="#888" stroke-width="2.200"/></symbol>
<symbol id="pick" viewBox="0 0 20 20"><path d="M4 1l4 4M8 1L4 5" stroke="#d82020" stroke-width="1.500"/><path d="M8 5v10l2.500-2 2 5 2-1-2-5h3z" fill="#fff" stroke="#888"/></symbol>
<symbol id="pickd" viewBox="0 0 20 20"><path d="M6 1l4 4M10 1L6 5" stroke="#d82020" stroke-width="1.500"/><path d="M10 5v10l2.500-2 2 5 2-1-2-5h3z" fill="#fff" stroke="#888"/><path d="M2 8h6v9H2z" fill="#fff" stroke="#333"/><path d="M3.500 11h3M3.500 13h3M3.500 15h3" stroke="#333"/></symbol>
<symbol id="ret" viewBox="0 0 20 20"><path d="M4 5h9q4 0 4 4t-4 4H6" fill="none" stroke="#555" stroke-width="2"/><path d="M6 9v8l-5-4z" fill="#555"/></symbol>
<symbol id="edit" viewBox="0 0 20 20"><path d="M8 4H3v12h3M9 16h9M16 4h2" fill="none" stroke="#777" stroke-width="1.300"/><path d="M8 14l1-4 5-8 2.500 1.500-5 8z" fill="#666"/></symbol>
<symbol id="cp" viewBox="0 0 20 20"><path d="M2 2h13v13H2z" fill="#d8d8d8"/><path d="M2 2h8v5H2z" fill="#aaa"/><path d="M6 8h8v4H6z" fill="#bbb"/><path d="M11 11h7v5l-2 2-5-2z" fill="#888"/></symbol>
<!-- table tools -->
<symbol id="q1" viewBox="0 0 20 20"><path d="M5 3h8v6H5z" fill="#fff" stroke="#777"/><path d="M15 18q4-5-3-9" fill="none" stroke="#3f78b8" stroke-width="2"/><path d="M8 8l6-1-2 6z" fill="#3f78b8"/></symbol>
<symbol id="q2" viewBox="0 0 20 20"><path d="M8 2h8v6H8z" fill="#fff" stroke="#777"/><path d="M7 7q-5 4-1 9" fill="none" stroke="#3f78b8" stroke-width="2"/><path d="M3 18l5 0 0-6z" fill="#3f78b8"/></symbol>
<symbol id="q3" viewBox="0 0 20 20"><path d="M2 2h16v16H2z" fill="#ccc" stroke="#666"/><path d="M2 2h16v3H2z" fill="#555"/><path d="M2 9h16M2 13h16M7 5v13M13 5v13" stroke="#666" stroke-width="1.500"/></symbol>
<symbol id="q4" viewBox="0 0 20 20"><path d="M2 9h16v9H2zM2 13h16M7 9v9M13 9v9M3 3l12 3" fill="none" stroke="#999"/><circle cx="3" cy="3" r="1.500" fill="#999"/><circle cx="16" cy="6" r="1.500" fill="#999"/></symbol>
<symbol id="gg" viewBox="0 0 20 20"><path d="M2 2h16v16H2z" fill="#e4e4e4" stroke="#888"/><path d="M6 2v16M10 2v16M14 2v16M2 6h16M2 10h16M2 14h16" stroke="#bbb" stroke-width=".8"/></symbol>
<symbol id="q5" viewBox="0 0 20 20"><use href="#gg"/><path d="M10 5v10M5 10h10" stroke="#999" stroke-width="4"/></symbol>
<symbol id="q6" viewBox="0 0 20 20"><use href="#gg"/><path d="M6 6l8 8M14 6l-8 8" stroke="#999" stroke-width="4"/></symbol>
<symbol id="q7" viewBox="0 0 20 20"><use href="#gg"/><circle cx="10" cy="6" r="2.500" fill="#999"/><circle cx="10" cy="14" r="2.500" fill="#999"/></symbol>
<symbol id="q8" viewBox="0 0 20 20"><path d="M2 2h16v16H2z" fill="#ccc" stroke="#888"/><path d="M5 5l10 10M15 5L5 15" stroke="#666" stroke-width="3.500"/></symbol>
<symbol id="q9" viewBox="0 0 20 20"><path d="M2 2h8v4H2zM2 14h8v4H2z" fill="#fff" stroke="#aaa"/><path d="M2 6h9v8H2z" fill="#888"/><path d="M12 8h3q3 0 3 3t-3 3h-1" fill="none" stroke="#888" stroke-width="1.700"/><path d="M14 11v6l-4-3z" fill="#888"/></symbol>
<symbol id="q10" viewBox="0 0 20 20"><path d="M2 2h8v4H2zM2 14h8v4H2z" fill="#fff" stroke="#aaa"/><path d="M2 6h8v7H2z" fill="#888"/><path d="M11 5l7 9M18 5l-7 9" stroke="#888" stroke-width="2.200"/></symbol>
<symbol id="q11" viewBox="0 0 20 20"><path d="M4 2h6v4H4zM4 14h6v4H4zM10 8h8v4h-8z" fill="#fff" stroke="#aaa"/><path d="M3 10h8" stroke="#888" stroke-width="2"/><path d="M1 10l5-4v8z" fill="#888"/></symbol>
<symbol id="q12" viewBox="0 0 20 20"><path d="M2 2h8v4H2zM2 14h8v4H2zM2 8h6v4H2z" fill="#fff" stroke="#aaa"/><path d="M8 10h6" stroke="#888" stroke-width="2"/><path d="M19 10l-6-4v8z" fill="#888"/></symbol>
<symbol id="q13" viewBox="0 0 20 20"><path d="M1.500 2.500h17v16h-17z" fill="#fff" stroke="#555" stroke-width="1.300"/><path d="M2 3h16v6H2z" fill="#d4d4f4"/></symbol>
<symbol id="q14" viewBox="0 0 20 20"><use href="#win" x="9" y="1"/><text x="1" y="18" font-size="10" class="ab">ab=</text></symbol>
<symbol id="q15" viewBox="0 0 20 20"><path d="M5 1h11l3 3v14H5z" fill="#fff" stroke="#666"/><path d="M8 6h8M8 9h8M8 12h8M11 4v10" stroke="#6aa86a"/><path d="M1 4h8v9H1z" fill="#58a058"/><path d="M3 6l4 5M7 6l-4 5" stroke="#fff" stroke-width="1.300"/><path d="M8 15h6l-3 4z" fill="#2e8a3e"/></symbol>
<symbol id="q16" viewBox="0 0 20 20"><path d="M2 6h16v12H2z" fill="#eee" stroke="#999" stroke-width="1.400"/><path d="M2 6h16v3H2z" fill="#999"/><path d="M4 11h4M4 14h4M10 11h6M10 14h6" stroke="#aaa" stroke-width="1.500"/><path d="M3 4q4-3 7-1l5-2 3 4-6 3-4-1z" fill="#ccc" stroke="#999"/></symbol>
</svg>

<header class="titlebar">
  <svg class="ic16"><use href="#app"/></svg><h1>Dlubal RFEM | 6.01.0001 | Stahlhalle_Verband_Joints2 (1) (2).rf6</h1>
  <div class="winctl"><button aria-label="Minimize"><svg><use href="#min"/></svg></button><button aria-label="Maximize"><svg><use href="#max"/></svg></button><button aria-label="Close"><svg><use href="#cls"/></svg></button></div>
</header>
<nav class="menubar">
  <svg class="logo"><use href="#rfem"/></svg>
  <button>File</button><button>Edit</button><button>View</button><button>Insert</button><button>Assign</button><button>Calculate</button><button>Results</button><button>Tools</button><button>Options</button><button>Window</button><button>CAD-BIM</button><button>Help</button>
  <span class="license">Online License 8 | Jannik Dunz | Dlubal Software GmbH</span>
  <div class="mdi"><button aria-label="Minimize document"><svg><use href="#bmin"/></svg></button><button aria-label="Restore document"><svg><use href="#float"/></svg></button><button aria-label="Close document"><svg><use href="#bx"/></svg></button></div>
</nav>
<div class="toolbar">
  <i class="grip"></i>
  <button class="t" title="New"><svg><use href="#new"/></svg></button><button class="t" title="Open"><svg><use href="#open"/></svg></button><button class="t" title="Cloud"><svg><use href="#cc"/></svg></button><button class="t" title="Blocks"><svg><use href="#hex"/></svg></button><button class="t" title="Base data"><svg><use href="#props"/></svg></button><button class="t" title="Save"><svg><use href="#save"/></svg></button><button class="t" title="Print"><svg><use href="#print"/></svg></button><button class="a" title="Print options"><svg><use href="#dd"/></svg></button><button class="t" title="New report"><svg><use href="#doc"/></svg></button><i class="sep"></i>
  <button class="t" title="Undo"><svg><use href="#undo"/></svg></button><button class="a" title="Undo list"><svg><use href="#dd"/></svg></button><button class="t" title="Redo"><svg><use href="#redo"/></svg></button><button class="a" title="Redo list"><svg><use href="#dd"/></svg></button><i class="sep"></i>
  <button class="t on" title="Navigator"><svg><use href="#nav"/></svg></button><button class="t on" title="Tables"><svg><use href="#grid"/></svg></button><button class="t" title="Control panel"><svg><use href="#colors"/></svg></button><button class="t" title="Console"><svg><use href="#cons"/></svg></button><button class="t" title="Scripts"><svg><use href="#sc"/></svg></button><button class="t" title="Manager"><svg><use href="#list"/></svg></button>
  <i class="brk"></i>
  <button class="t" title="Select"><svg><use href="#s1"/></svg></button><button class="t" title="Select ellipse"><svg><use href="#s2"/></svg></button><button class="t" title="Select ring"><svg><use href="#s3"/></svg></button><button class="t" title="Select polygon"><svg><use href="#s4"/></svg></button><button class="t" title="Special selection"><svg><use href="#s5"/></svg></button>
  <i class="brk"></i>
  <button class="t" title="New imperfection case"><svg><use href="#ld1"/></svg></button><button class="t" title="Imperfection cases"><svg><use href="#ld2"/></svg></button>
  <button class="loadcase"><b>LoO</b><i></i><span>IC11</span><em>Imperfektionen nach +X</em><svg class="ic10"><use href="#thin"/></svg></button><button class="step off" aria-label="Previous load case"><svg><use href="#tl"/></svg></button><button class="step" aria-label="Next load case"><svg><use href="#tr"/></svg></button>
  <button class="t" title="Clear filter"><svg><use href="#filx"/></svg></button><button class="a" title="Filter list"><svg><use href="#dd"/></svg></button><button class="t" title="Show imperfections"><svg><use href="#gef"/></svg></button><button class="t" title="Imperfection values"><svg><use href="#xg"/></svg></button><button class="t" title="Show loads"><svg><use href="#ea"/></svg></button><button class="t" title="Load values"><svg><use href="#xa"/></svg></button><button class="t on" title="Show mesh"><svg><use href="#mesh"/></svg></button><button class="a on" title="Mesh list"><svg><use href="#dd"/></svg></button><button class="t" title="Show results"><svg><use href="#ew"/></svg></button><button class="t" title="Result values"><svg><use href="#xw"/></svg></button><i class="sep"></i>
  <button class="t" title="Result settings"><svg><use href="#rd"/></svg></button><button class="t" title="Calculator"><svg><use href="#abac"/></svg></button><button class="a" title="Calculator list"><svg><use href="#dd"/></svg></button>
  <i class="brk"></i>
  <button class="t" title="Reset zoom"><svg><use href="#magx"/></svg></button><button class="t" title="Isometric"><svg><use href="#cube"/></svg></button><button class="t" title="Edit view"><svg><use href="#cubep"/></svg></button><i class="sep"></i><button class="t" title="View X"><svg><use href="#vx"/></svg></button><button class="t" title="View -Y"><svg><use href="#vy"/></svg></button><button class="t" title="View Z"><svg><use href="#vz"/></svg></button><button class="t" title="View -X"><svg><use href="#vmx"/></svg></button><button class="a" title="View list"><svg><use href="#dd"/></svg></button><button class="t" title="Inspect"><svg><use href="#micro"/></svg></button><button class="a" title="Inspect list"><svg><use href="#dd"/></svg></button><i class="sep"></i><button class="t" title="Rendering"><svg><use href="#cubes"/></svg></button><button class="a" title="Rendering list"><svg><use href="#dd"/></svg></button><button class="more">»</button>
</div>
<div class="toolbar">
  <i class="grip"></i>
  <button class="t" title="Node"><svg><use href="#node"/></svg></button><button class="a wide" title="Node list"><svg><use href="#dd"/></svg></button><button class="t" title="Line"><svg><use href="#line"/></svg></button><button class="t" title="Member"><svg><use href="#member"/></svg></button><button class="a" title="Member list"><svg><use href="#dd"/></svg></button><button class="t" title="Polyline"><svg><use href="#poly"/></svg></button><button class="a" title="Polyline list"><svg><use href="#dd"/></svg></button><i class="sep"></i>
  <button class="t" title="Nodal support"><svg><use href="#sup"/></svg></button><button class="t" title="Line support"><svg><use href="#sup2"/></svg></button><button class="t" title="Surface support"><svg><use href="#sup3"/></svg></button><i class="sep"></i><button class="t" title="Dimension"><svg><use href="#dimx"/></svg></button><button class="a" title="Dimension list"><svg><use href="#dd"/></svg></button><button class="t" title="Note"><svg><use href="#dimxx"/></svg></button><i class="sep"></i>
  <button class="t" title="Surface"><svg><use href="#surf"/></svg></button><button class="a" title="Surface list"><svg><use href="#dd"/></svg></button><button class="t" title="Curved surface"><svg><use href="#surf2"/></svg></button><button class="a" title="Curved list"><svg><use href="#dd"/></svg></button><button class="t" title="Opening"><svg><use href="#opn"/></svg></button><button class="a" title="Opening list"><svg><use href="#dd"/></svg></button><button class="t" title="Solid"><svg><use href="#sol"/></svg></button><button class="a" title="Solid list"><svg><use href="#dd"/></svg></button><button class="t" title="Block"><svg><use href="#gbox"/></svg></button><i class="sep"></i>
  <button class="t" title="Nodal load"><svg><use href="#nl"/></svg></button><button class="t" title="Member load"><svg><use href="#ll"/></svg></button><button class="t" title="Surface load"><svg><use href="#al"/></svg></button><button class="t" title="Solid load"><svg><use href="#gl"/></svg></button><button class="t" title="Imperfection"><svg><use href="#imp"/></svg></button><button class="a" title="Imperfection list"><svg><use href="#dd"/></svg></button><button class="t" title="Load wizard"><svg><use href="#al"/></svg></button><button class="a" title="Wizard list"><svg><use href="#dd"/></svg></button>
  <i class="brk"></i>
  <button class="t" title="Filter"><svg><use href="#fil"/></svg></button><i class="sep"></i><button class="t" title="Deformation"><svg><use href="#g1"/></svg></button><button class="t" title="Members results"><svg><use href="#g2"/></svg></button><button class="t" title="Surface results"><svg><use href="#g3"/></svg></button><button class="t" title="Solid results"><svg><use href="#g4"/></svg></button><button class="t" title="Reactions"><svg><use href="#g5"/></svg></button><button class="t" title="Sections"><svg><use href="#g6"/></svg></button><i class="sep"></i><button class="t" title="Line diagram"><svg><use href="#w1"/></svg></button><button class="t" title="Member diagram"><svg><use href="#w2"/></svg></button><button class="t" title="Point diagram"><svg><use href="#w3"/></svg></button><button class="t" title="Support diagram"><svg><use href="#w4"/></svg></button><button class="t" title="Section diagram"><svg><use href="#w5"/></svg></button><button class="t" title="New section"><svg><use href="#w6"/></svg></button><i class="sep"></i><button class="t" title="Smooth"><svg><use href="#g7"/></svg></button><button class="a" title="Smooth list"><svg><use href="#dd"/></svg></button>
  <i class="brk"></i>
  <div class="pick cspick"><i></i><select aria-label="Coordinate system"><option>1 - Global XYZ</option></select><svg class="ic10"><use href="#thin"/></svg></div>
  <button class="t" title="Coordinate systems"><svg><use href="#cs"/></svg></button><i class="sep"></i><button class="t" title="Grid settings"><svg><use href="#gs1"/></svg></button><button class="t" title="Snap"><svg><use href="#gs2"/></svg></button><button class="t on" title="Plane XY"><svg><use href="#p1"/></svg></button><button class="t" title="Plane YZ"><svg><use href="#p2"/></svg></button><button class="t" title="Plane XZ"><svg><use href="#p3"/></svg></button><i class="sep"></i><button class="t" title="Move"><svg><use href="#o1"/></svg></button><button class="t" title="Rotate"><svg><use href="#o2"/></svg></button><button class="t" title="Mirror"><svg><use href="#o3"/></svg></button><button class="t" title="Connect"><svg><use href="#o4"/></svg></button><button class="t" title="Settings"><svg><use href="#o5"/></svg></button>
  <i class="brk"></i>
  <button class="t" title="Structure table"><svg><use href="#tri"/></svg></button><button class="a" title="Table list"><svg><use href="#dd"/></svg></button><button class="more">»</button>
</div>

<main class="work">
<aside class="navigator">
  <div class="dockhead"><h2>Navigator - Data</h2><button aria-label="Float"><svg><use href="#float"/></svg></button><button aria-label="Close"><svg><use href="#bx"/></svg></button></div>
  <ul class="tree">
  <li class="l0"><svg class="ico"><use href="#rfem"/></svg><span>RFEM</span></li>
  <li class="l1"><svg class="chv"><use href="#chd"/></svg><svg class="ico"><use href="#file"/></svg><span><b>Stahlhalle_Verband_Joints2 (1) (2).rf6*</b></span></li>
  <li class="l2"><svg class="chv"><use href="#chd"/></svg><svg class="ico"><use href="#foo"/></svg><span>Basic Objects</span></li>
  <li class="l3"><svg class="chv"><use href="#chr"/></svg><svg class="ico"><use href="#mat"/></svg><span>Materials</span></li>
  <li class="l3"><svg class="chv"><use href="#chr"/></svg><svg class="ico"><use href="#sec"/></svg><span>Sections</span></li>
  <li class="l3"><svg class="chv"></svg><svg class="ico"><use href="#thk"/></svg><span>Thicknesses</span></li>
  <li class="l3"><svg class="chv"><use href="#chr"/></svg><svg class="ico"><use href="#nd"/></svg><span>Nodes</span></li>
  <li class="l3"><svg class="chv"><use href="#chr"/></svg><svg class="ico"><use href="#ln"/></svg><span>Lines</span></li>
  <li class="l3 sel"><svg class="chv"><use href="#chr"/></svg><svg class="ico"><use href="#mb"/></svg><span>Members</span></li>
  <li class="l3"><svg class="chv"></svg><svg class="ico"><use href="#sf"/></svg><span>Surfaces</span></li>
  <li class="l3"><svg class="chv"></svg><svg class="ico"><use href="#op"/></svg><span>Openings</span></li>
  <li class="l3"><svg class="chv"></svg><svg class="ico"><use href="#sd"/></svg><span>Solids</span></li>
  <li class="l3"><svg class="chv"></svg><svg class="ico"><use href="#ls"/></svg><span>Line Sets</span></li>
  <li class="l3"><svg class="chv"><use href="#chr"/></svg><svg class="ico"><use href="#ms"/></svg><span>Member Sets</span></li>
  <li class="l3"><svg class="chv"></svg><svg class="ico"><use href="#ss"/></svg><span>Surface Sets</span></li>
  <li class="l3"><svg class="chv"></svg><svg class="ico"><use href="#sds"/></svg><span>Solid Sets</span></li>
  <li class="l2"><svg class="chv"><use href="#chr"/></svg><svg class="ico"><use href="#fo"/></svg><span>Special Objects</span></li>
  <li class="l2"><svg class="chv"><use href="#chr"/></svg><svg class="ico"><use href="#fo"/></svg><span>Types for Nodes</span></li>
  <li class="l2"><svg class="chv"><use href="#chr"/></svg><svg class="ico"><use href="#fo"/></svg><span>Types for Lines</span></li>
  <li class="l2"><svg class="chv"><use href="#chr"/></svg><svg class="ico"><use href="#fo"/></svg><span>Types for Members</span></li>
  <li class="l2"><svg class="chv"><use href="#chr"/></svg><svg class="ico"><use href="#fo"/></svg><span>Types for Surfaces</span></li>
  <li class="l2"><svg class="chv"><use href="#chr"/></svg><svg class="ico"><use href="#fo"/></svg><span>Types for Solids</span></li>
  <li class="l2"><svg class="chv"><use href="#chr"/></svg><svg class="ico"><use href="#fo"/></svg><span>Types for Special Objects</span></li>
  <li class="l2"><svg class="chv"><use href="#chr"/></svg><svg class="ico"><use href="#fo"/></svg><span>Types for Steel Design</span></li>
  <li class="l2"><svg class="chv"><use href="#chr"/></svg><svg class="ico"><use href="#fo"/></svg><span>Types for Steel Joint Design</span></li>
  <li class="l2"><svg class="chv"><use href="#chr"/></svg><svg class="ico"><use href="#fo"/></svg><span>Imperfections</span></li>
  <li class="l2"><svg class="chv"><use href="#chd"/></svg><svg class="ico"><use href="#foo"/></svg><span>Load Cases &amp; Combinations</span></li>
  <li class="l3"><svg class="chv"><use href="#chr"/></svg><svg class="ico"><use href="#lc"/></svg><span>Load Cases</span></li>
  <li class="l3"><svg class="chv"><use href="#chr"/></svg><svg class="ico"><use href="#ac"/></svg><span>Actions</span></li>
  <li class="l3"><svg class="chv"><use href="#chr"/></svg><svg class="ico"><use href="#ds"/></svg><span>Design Situations</span></li>
  <li class="l3"><svg class="chv"><use href="#chr"/></svg><svg class="ico"><use href="#acc"/></svg><span>Action Combinations</span></li>
  <li class="l3"><svg class="chv"><use href="#chr"/></svg><svg class="ico"><use href="#loc"/></svg><span>Load Combinations</span></li>
  <li class="l3"><svg class="chv"><use href="#chr"/></svg><svg class="ico"><use href="#sta"/></svg><span>Static Analysis Settings</span></li>
  <li class="l3"><svg class="chv"><use href="#chr"/></svg><svg class="ico"><use href="#stb"/></svg><span>Stability Analysis Settings</span></li>
  <li class="l3"><svg class="chv"><use href="#chr"/></svg><svg class="ico"><use href="#cmb"/></svg><span>Combination Wizards</span></li>
  <li class="l2"><svg class="chv"><use href="#chr"/></svg><svg class="ico"><use href="#fo"/></svg><span>Load Wizards</span></li>
  <li class="l2"><svg class="chv"><use href="#chd"/></svg><svg class="ico"><use href="#foo"/></svg><span>Loads</span></li>
  <li class="l3"><svg class="chv"><use href="#chr"/></svg><svg class="ico"><use href="#fo"/></svg><span>LC1 - Self-weight</span></li>
  <li class="l3"><svg class="chv"><use href="#chr"/></svg><svg class="ico"><use href="#fo"/></svg><span>LC2 - Snow</span></li>
  <li class="l3"><svg class="chv"><use href="#chr"/></svg><svg class="ico"><use href="#fo"/></svg><span>LC3 - Wind</span></li>
  <li class="l3"><svg class="chv"><use href="#chr"/></svg><svg class="ico"><use href="#fo"/></svg><span>LC4 - Wind</span></li>
  <li class="l3"><svg class="chv"><use href="#chr"/></svg><svg class="ico"><use href="#fo"/></svg><span>LC5 - Wind</span></li>
  <li class="l3"><svg class="chv"><use href="#chr"/></svg><svg class="ico"><use href="#fo"/></svg><span>LC6 - Wind</span></li>
  <li class="l3"><svg class="chv"><use href="#chr"/></svg><svg class="ico"><use href="#fo"/></svg><span>LC7 - Wind</span></li>
  <li class="l3"><svg class="chv"><use href="#chr"/></svg><svg class="ico"><use href="#fo"/></svg><span>LC8 - Wind</span></li>
  <li class="l3"><svg class="chv"><use href="#chr"/></svg><svg class="ico"><use href="#fo"/></svg><span>LC9 - Wind</span></li>
  <li class="l3"><svg class="chv"><use href="#chr"/></svg><svg class="ico"><use href="#fo"/></svg><span>LC10 - Wind, w+, -Y</span></li>
  <li class="l3"><svg class="chv"><use href="#chr"/></svg><svg class="ico"><use href="#fo"/></svg><span>LC15 - Prestress</span></li>
  <li class="l2"><svg class="chv"><use href="#chr"/></svg><svg class="ico"><use href="#fo"/></svg><span>Results</span></li>
  <li class="l2"><svg class="chv"><use href="#chr"/></svg><svg class="ico"><use href="#fo"/></svg><span>Guide Objects</span></li>
  <li class="l2"><svg class="chv"><use href="#chr"/></svg><svg class="ico"><use href="#fo"/></svg><span>Steel Design</span></li>
  <li class="l2"><svg class="chv"><use href="#chr"/></svg><svg class="ico"><use href="#fo"/></svg><span>Steel Joint Design</span></li>
  <li class="l2"><svg class="chv"></svg><svg class="ico"><use href="#fo"/></svg><span>Printout Reports</span></li>
  </ul>
  <div class="navtabs"><button class="cur" aria-label="Data"><svg><use href="#t1"/></svg></button><button aria-label="Display"><svg><use href="#t2"/></svg></button><button aria-label="Views"><svg><use href="#t3"/></svg></button></div>
</aside>

<section class="right">
  <div class="view">
  <svg class="scene" viewBox="0 0 1440 1410" fill="none">
    <path d="M0 277L52 270 265 198 478 140 690 82 1362 818 1150 873 937 930 725 1000 512 1072 182 715 0 520z" fill="#fff1cc"/>
    <g stroke="#7f9a98" stroke-width="16"><path d="M690 90V355M478 150V420M265 208V485"/></g>
    <g stroke="#5f8a8c" stroke-width="4"><path d="M690 90V355M478 150V420M265 208V485"/></g>
    <g stroke="#7f9a98" stroke-width="24"><path d="M802 220V478M915 340V600M1026 460V722M1138 580V845M1250 710V850"/></g>
    <g stroke="#5f8588" stroke-width="8"><path d="M802 220V478M915 340V600M1026 460V722M1138 580V845M1250 710V850"/></g>
    <g stroke="#a8979c" stroke-width="4"><path d="M690 90L590 250 480 420M570 280L500 425M800 222L712 365M600 265L905 325M380 320L700 380M370 335L285 495M182 395L478 438M182 497L270 512M600 270L690 355M810 225L912 600M910 345L805 478M945 632L1240 688M920 640L830 800M735 688L1040 748M710 695L615 870M520 760L830 805M495 770L405 940M325 832L610 878M1135 590L1045 735M1145 595L1215 850M1245 715L1140 845"/></g>
    <g stroke="#8a8aca" stroke-width="4"><path d="M1362 825L1150 1150M1155 878L1362 1090M295 850L400 1225M390 960L290 1105M1215 850L1250 970"/></g>
    <g stroke="#5b8fcc" stroke-width="13"><path d="M1362 820V1090M1150 880V1155M937 940V1220M725 1010V1282M512 1075V1348"/></g>
    <g stroke="#3f76b4" stroke-width="3"><path d="M1362 820V1090M1150 880V1155M937 940V1220M725 1010V1282M512 1075V1348"/></g>
    <g stroke="#5b8fcc" stroke-width="23"><path d="M288 830V1105M399 950V1226M1250 852V968M180 720V985"/></g>
    <g stroke="#3f6ea8" stroke-width="6"><path d="M288 830V1105M399 950V1226M1250 852V968"/></g>
    <g stroke="#f7b51e" stroke-width="22"><path d="M800 207L590 262 380 318 182 388M910 328L700 380 490 440 182 544M1020 455L815 507 600 565 390 632 182 708M1135 572L920 625 712 685 500 760 290 830M1245 695L1040 750 825 805 615 880 400 950"/></g>
    <g stroke="#a9a583" stroke-width="16"><path d="M800 207L590 262 380 318 182 388M910 328L700 380 490 440 182 544M1020 455L815 507 600 565 390 632 182 708M1135 572L920 625 712 685 500 760 290 830M1245 695L1040 750 825 805 615 880 400 950"/></g>
    <g stroke="#e8b840" stroke-width="11"><path d="M800 207L590 262 380 318 182 388M910 328L700 380 490 440 182 544M1020 455L815 507 600 565 390 632 182 708M1135 572L920 625 712 685 500 760 290 830M1245 695L1040 750 825 805 615 880 400 950"/></g>
    <g stroke="#7f9a98" stroke-width="7"><path d="M800 207L590 262 380 318 182 388M910 328L700 380 490 440 182 544M1020 455L815 507 600 565 390 632 182 708M1135 572L920 625 712 685 500 760 290 830M1245 695L1040 750 825 805 615 880 400 950"/></g>
    <g fill="#8fa8a8" stroke="#f7b51e" stroke-width="3"><path d="M720 225L800 200V228L720 235zM832 348L908 322V350L832 357zM944 468L1022 444V472L944 478zM1056 590L1136 564V596L1056 600zM1168 712L1246 686V716L1168 720zM188 698L265 676 192 718zM292 822L375 794 300 838zM402 944L485 918 412 960z"/></g>
    <g stroke="#222" stroke-width="4"><path d="M724 226L796 204M836 348L904 326M948 469L1018 448M1060 590L1132 568M1172 712L1242 690"/></g>
    <g stroke="#f7b51e" stroke-width="17"><path d="M690 82L478 140 265 198 52 270 0 280M1362 818L1150 873 937 930 725 1000 512 1072"/></g>
    <g stroke="#8a7c58" stroke-width="10"><path d="M690 82L478 140 265 198 52 270 0 280M1362 818L1150 873 937 930 725 1000 512 1072"/></g>
    <g stroke="#7a93a8" stroke-width="3"><path d="M690 82L478 140 265 198 52 270 0 280M1362 818L1150 873 937 930 725 1000 512 1072"/></g>
    <g stroke="#f2ae1c" stroke-width="9"><path d="M690 82L1362 818M265 198L937 930M52 270L725 1000M182 715L512 1072"/></g>
    <g stroke="#8a6d2a" stroke-width="3"><path d="M690 82L1362 818M265 198L937 930M52 270L725 1000M182 715L512 1072"/></g>
    <path d="M478 145L700 380 920 625 1150 873" stroke="#ffb60f" stroke-width="12"/>
    <g fill="#fff" stroke="#148a84" stroke-width="4"><path d="M1142 882h17v8l-9 6-8-6zM929 940h17v8l-9 6-8-6zM717 1011h17v8l-9 6-8-6zM470 150h16v8h-16zM257 208h16v8h-16z"/></g>
    <path d="M1132 566h14M1132 584v14h12v-14" stroke="#148a54" stroke-width="4"/>
    <path d="M1130 550h20l12 18v30" stroke="#888" stroke-width="2" stroke-dasharray="3 4"/>
    <g fill="#38d838"><path d="M512 1350l9 12h-18zM725 1286l9 12h-18zM937 1222l9 12h-20zM1150 1156l9 14h-18zM1362 1092l11 13h-22zM1250 972l10 14h-20zM288 1106l10 13h-20zM399 1228l11 13h-22zM183 985h4v12h-4zM478 426l8 10h-16zM691 362l8 10h-16z"/></g>
    <g fill="#f01010"><path d="M507 1343h11v12h-11zM720 1277h11v12h-11zM932 1215h11v12h-11zM1145 1150h11v12h-11zM1357 1085h11v12h-11zM1245 963h11v12h-11zM283 1099h11v12h-11zM394 1221h11v12h-11zM260 483h10v9h-10zM474 418h10v9h-10zM686 353h10v9h-10zM797 476h10v9h-10zM910 598h10v9h-10zM1021 719h10v9h-10zM1133 842h10v9h-10z"/></g>
    <g stroke="#1a1a1a" stroke-width="5" stroke-linejoin="round">
      <path d="M1094 87L1275 30 1372 137 1190 187z" fill="#d0d0d0"/><path d="M1094 87L1190 187V358L1094 257z" fill="#c2c2c2"/><path d="M1190 187L1372 137V300L1190 358z" fill="#d6d6d6"/>
      <path stroke-width="7" d="M1145 72L1237 175V342M1235 43L1327 150V315M1300 57L1118 112V280M1345 108L1165 162V330M1094 132L1190 232 1372 180M1094 215L1190 315 1372 262"/>
    </g>
    <g class="cubetext"><text x="1214" y="130" fill="#8c8cf0" transform="rotate(-17 1240 115)">+Z</text><text x="1124" y="244" fill="#e89090" transform="rotate(14 1145 230)">+X</text><text x="1258" y="262" fill="#84dc84" transform="rotate(-10 1280 245)">-Y</text></g>
  </svg>
  </div>
  <section class="tables">
    <div class="dockhead"><button aria-label="Float"><svg><use href="#float"/></svg></button><button aria-label="Close"><svg><use href="#bx"/></svg></button></div>
    <div class="submenu"></div>
    <div class="tbar2">
      <div class="pick p1"><svg class="ic16"><use href="#tri"/></svg><select aria-label="Table group"><option>Structure</option></select><svg class="ic10"><use href="#thin"/></svg></div><button class="step off" aria-label="Previous"><svg><use href="#tl"/></svg></button><button class="step" aria-label="Next"><svg><use href="#tr"/></svg></button><i class="brk"></i>
      <div class="pick p2"><svg class="ic16"><use href="#mb"/></svg><select aria-label="Object group"><option>Basic Objects</option></select><svg class="ic10"><use href="#thin"/></svg></div><button class="step off" aria-label="Previous group"><svg><use href="#tl"/></svg></button><button class="step" aria-label="Next group"><svg><use href="#tr"/></svg></button><i class="sep"></i>
      <button class="t on" title="Go to"><svg><use href="#q1"/></svg></button><button class="t" title="Pick"><svg><use href="#q2"/></svg></button><i class="sep"></i><button class="t" title="Rows"><svg><use href="#q3"/></svg></button><button class="t" title="Select row"><svg><use href="#q4"/></svg></button><button class="t" title="Add"><svg><use href="#q5"/></svg></button><button class="t" title="Remove"><svg><use href="#q6"/></svg></button><button class="t" title="Info"><svg><use href="#q7"/></svg></button><i class="sep"></i><button class="t" title="Delete"><svg><use href="#q8"/></svg></button><i class="sep"></i><button class="t" title="Insert row"><svg><use href="#q9"/></svg></button><button class="t" title="Delete row"><svg><use href="#q10"/></svg></button><button class="t" title="Move left"><svg><use href="#q11"/></svg></button><button class="t" title="Move right"><svg><use href="#q12"/></svg></button><i class="sep"></i><button class="t" title="Columns"><svg><use href="#q13"/></svg></button><i class="sep"></i><button class="t" title="Parameters"><svg><use href="#q14"/></svg></button><button class="t" title="Formula"><svg><use href="#fx"/></svg></button><button class="t" title="Delete formula"><svg><use href="#fxx"/></svg></button><button class="t" title="Show formula"><svg><use href="#fxe"/></svg></button><i class="sep"></i><button class="t" title="Export"><svg><use href="#q15"/></svg></button><i class="sep"></i><button class="t" title="Settings"><svg><use href="#q16"/></svg></button><button class="t last" title="Units"><svg><use href="#unit"/></svg></button>
    </div>
    <div class="gridwrap">
      <table class="mats">
        <colgroup><col class="c60"><col><col class="c100"><col class="c200"><col class="c100"><col class="c100"><col class="c100"><col class="c100"><col class="c100"><col class="c100"><col class="c85"><col class="c9"></colgroup>
        <thead>
        <tr class="strip"><td></td><td></td><td></td><td></td><td></td><td></td><td></td><td></td><td></td><td></td><td></td><td></td></tr>
        <tr><th class="rh two">Material<br>No.</th><th>Material Name</th><th class="two">Material<br>Type</th><th>Material Model</th><th>Modulus of Elast.<br>E [N/mm²]</th><th>Shear Modulus<br>G [N/mm²]</th><th>Poisson's Ratio<br>ν [--]</th><th>Specific Weight<br>γ [kN/m³]</th><th>Mass Density<br>ρ [kg/m³]</th><th>Coeff. of Th. Exp.<br>α [1/°C]</th><th>Options</th><th></th></tr>
        </thead>
        <tbody>
        <tr><th>1</th><td><i class="sw cyan"></i>S235</td><td><i class="sw orange"></i>Steel</td><td><i class="sw cyan"></i>Isotropic | Linear Elastic</td><td class="n">210000.0</td><td class="n">80769.2</td><td class="n">0.300</td><td class="n">78.50</td><td class="n">7850.00</td><td class="n">0.000012</td><td></td><td></td></tr>
        <tr><th>2</th><td></td><td></td><td></td><td></td><td></td><td class="y"></td><td></td><td></td><td></td><td></td><td class="y"></td></tr>
        <tr><th>3</th><td></td><td></td><td></td><td></td><td></td><td class="y"></td><td></td><td></td><td></td><td></td><td class="y"></td></tr>
        <tr><th>4</th><td></td><td></td><td></td><td></td><td></td><td class="y"></td><td></td><td></td><td></td><td></td><td class="y"></td></tr>
        <tr><th>5</th><td></td><td></td><td></td><td></td><td></td><td class="y"></td><td></td><td></td><td></td><td></td><td class="y"></td></tr>
        <tr><th>6</th><td></td><td></td><td></td><td></td><td></td><td class="y"></td><td></td><td></td><td></td><td></td><td class="y"></td></tr>
        </tbody>
      </table>
      <div class="vbar"><svg><use href="#up"/></svg><i></i><svg class="end"><use href="#dn"/></svg></div>
    </div>
    <div class="hbar"><svg><use href="#lf"/></svg><i></i><svg class="end"><use href="#rt"/></svg></div>
    <div class="sheets">
      <div class="pager"><button aria-label="First"><svg><use href="#first"/></svg></button><button aria-label="Back"><svg><use href="#tl"/></svg></button><span>1 of 13</span><button aria-label="Forward"><svg><use href="#tr"/></svg></button><button aria-label="Last"><svg><use href="#last"/></svg></button></div>
      <button class="cur">Materials</button><button>Sections</button><button>Thicknesses</button><button>Nodes</button><button>Lines</button><button>Members</button><button>Surfaces</button><button>Openings</button><button>Solids</button><button>Line Sets</button><button>Member Sets</button><button>Surface Sets</button><button>Solid Sets</button>
    </div>
  </section>
</section>
</main>
<footer class="status"><button class="in">SNAP</button><button>GRID</button><button>LGRID</button><button class="in">OSNAP</button><span class="w89"></span><span class="w106"></span><span class="w156">CS: Global XYZ</span><span class="w66">Plane: XY</span><span class="w76"></span><span class="w76"></span><span class="w76"></span><span class="w8"></span><svg class="ic10"><use href="#grip"/></svg></footer>

<div class="dialog" role="dialog" aria-label="New Load Wizard">
  <div class="dtitle"><svg class="ic16"><use href="#app"/></svg><h2>New Load Wizard | Member Loads from Area Load</h2><button aria-label="Minimize"><svg class="faint"><use href="#min"/></svg></button><button aria-label="Maximize"><svg><use href="#max"/></svg></button><button aria-label="Close"><svg><use href="#cls"/></svg></button></div>
  <div class="dbody">
    <section class="panel lister">
      <h3>List</h3>
      <table class="items"><tbody><tr class="sel"><td class="k"><i></i></td><td class="n">1</td><td>LC1 - Self-weight | Uniform | Zᴀ</td></tr><tr class="fill"><td class="k"></td><td class="n"></td><td></td></tr></tbody></table>
      <div class="btns"><button class="sq" title="New"><svg><use href="#dn1"/></svg></button><button class="sq" title="Copy"><svg><use href="#dn2"/></svg></button><button class="sq dis gap" title="Check all"><svg><use href="#dc1"/></svg></button><button class="sq dis" title="Invert"><svg><use href="#dc2"/></svg></button><button class="sq push" title="Delete"><svg><use href="#del"/></svg></button></div>
    </section>
    <div class="detail">
      <div class="heads">
        <section class="panel hno"><h3><label for="no">No.</label></h3><input id="no" class="num" value="1"></section>
        <section class="panel hname"><h3><label for="nm">Name</label></h3><div class="line"><input id="nm" class="ro" readonly value="LC1 - Self-weight | Uniform | Zᴀ"><button class="sq" title="Edit name"><svg><use href="#edit"/></svg></button></div></section>
        <section class="panel hgen"><h3><label for="gn">Generated on Members No.</label></h3><input id="gn" class="ro" readonly value="2-5,11-16,19-24,27-32,35-40,43-48,51-54,59-88"></section>
      </div>
      <div class="tabs"><button>Main</button><button class="cur">Geometry</button></div>
      <div class="content">
        <div class="col">
          <section class="panel bound">
            <h3>Boundary of Area Load Plane</h3>
            <div class="nodes"><div class="clip"><table>
              <thead><tr><th></th><th>Corner Nodes No.</th></tr></thead>
              <tbody>
              <tr><th>1</th><td>6,61,59,4</td></tr><tr class="sel"><th>2</th><td>2,3,14,12</td></tr><tr><th>3</th><td>3,4,15,14</td></tr><tr><th>4</th><td>14,15,24,23</td></tr><tr><th>5</th><td>12,14,23,21</td></tr><tr><th>6</th><td>21,23,32,30</td></tr><tr><th>7</th><td>23,24,33,32</td></tr><tr><th>8</th><td>32,33,42,41</td></tr><tr><th>9</th><td>30,32,41,39</td></tr><tr><th>10</th><td>39,41,50,48</td></tr><tr><th>11</th><td>41,42,51,50</td></tr><tr><th>12</th><td>50,51,59,58</td></tr><tr><th>13</th><td>48,50,58,57</td></tr><tr><th>14</th><td></td></tr>
              </tbody></table></div>
              <div class="vbar"><svg><use href="#up"/></svg><i></i><svg class="end"><use href="#dn"/></svg></div>
            </div>
            <div class="btns"><button class="sq" title="Pick nodes"><svg><use href="#pick"/></svg></button><button class="sq" title="Pick list"><svg><use href="#pickd"/></svg></button><button class="sq push" title="Delete row"><svg><use href="#del"/></svg></button></div>
          </section>
          <section class="panel remove">
            <h3>Remove Influence from</h3>
            <label for="m1">Members No.</label>
            <div class="line"><input id="m1"><button class="sq" title="Pick members"><svg><use href="#pick"/></svg></button><button class="sq" title="Reset members"><svg><use href="#ret"/></svg></button></div>
            <label for="m2">Members parallel to member No.</label>
            <div class="line"><input id="m2"><button class="sq" title="Pick parallel"><svg><use href="#pick"/></svg></button><button class="sq" title="Reset parallel"><svg><use href="#ret"/></svg></button></div>
          </section>
          <section class="panel settings">
            <h3>Settings</h3>
            <label for="ap">Area of load application</label>
            <select id="ap" class="ro"><option>Fully closed plane</option></select>
          </section>
        </div>
        <section class="panel preview"><button class="sq dis" title="Copy picture"><svg><use href="#cp"/></svg></button></section>
      </div>
    </div>
  </div>
  <div class="dfoot"><button class="sq" title="Units"><svg><use href="#unit"/></svg></button><button class="swatch" aria-label="Color"></button><button class="sq" title="Display"><svg><use href="#clr"/></svg></button><button class="sq sp" title="Monitor"><svg><use href="#mon"/></svg></button><button class="sq sp" title="Function"><svg><use href="#fxe"/></svg></button>
  <div class="acts"><button>OK</button><button>Cancel</button><button>Apply</button></div></div>
  <svg class="dgrip"><use href="#grip"/></svg>
</div>
</body>
</html>
```

FILE: styles.css
```css
* { box-sizing: border-box; }
body {
  margin: 0; min-height: 100vh; display: flex; flex-direction: column; position: relative;
  border: 1px solid #a0a0a0; background: #f7f7f7; color: #000; overflow: hidden;
  font: 11px/16px "Open Sans", "Noto Sans", sans-serif;
}
h1, h2, h3, ul { margin: 0; padding: 0; font-size: inherit; font-weight: 400; }
button, input, select { font: inherit; color: inherit; margin: 0; padding: 0; border: 0; background: none; border-radius: 0; }
svg { display: block; flex: none; }
i { font-style: normal; }
table { border-collapse: separate; border-spacing: 0; }
.sprite { position: absolute; width: 0; height: 0; }
.bt { font-family: "Open Sans", sans-serif; font-weight: 700; fill: #111; }
.gt { font-family: "Open Sans", sans-serif; font-weight: 700; fill: #777; }
.fx { font-family: "Liberation Serif", serif; font-style: italic; font-weight: 700; fill: #222; }
.fx.gy { fill: #777; font-weight: 400; }
.ab { font-family: "Liberation Serif", serif; font-style: italic; font-weight: 700; }
.ic16 { width: 16px; height: 16px; }
.ic10 { width: 10px; height: 10px; }

.titlebar { display: flex; align-items: center; height: 30px; padding-left: 8px; background: #fff; }
.titlebar h1 { margin-left: 6px; color: #8c8c8c; }
.winctl { margin-left: auto; margin-right: 2px; display: flex; color: #777; }
.winctl button { width: 45px; height: 28px; display: grid; place-items: center; }
.winctl svg, .dtitle button svg { width: 12px; height: 12px; }
.dtitle button .faint { opacity: .5; }

.menubar { display: flex; align-items: center; height: 20px; }
.logo { width: 16px; height: 12px; margin-right: 1px; }
.menubar > button { padding: 0 8px; }
.license { margin-left: auto; margin-right: 6px; }
.mdi { display: flex; gap: 1px; }
.mdi button { width: 18px; height: 18px; background: #fff; border: 1px solid #e4e4e4; display: grid; place-items: center; color: #66788c; }
.mdi svg { width: 12px; height: 12px; }

.toolbar { display: flex; align-items: center; height: 28px; padding-bottom: 2px; border-top: 1px solid #e2e2e2; white-space: nowrap; }
.grip { flex: none; width: 9px; height: 18px; border-left: 2px dotted #c0c0c0; margin-left: 4px; margin-right: -5px; }
.t { flex: none; width: 26px; height: 24px; display: grid; place-items: center; border: 1px solid transparent; }
.t svg { width: 20px; height: 20px; }
.a { flex: none; width: 12px; height: 24px; display: grid; place-items: center; }
.a svg { width: 12px; height: 20px; }
.a.wide { width: 14px; }
.on { background: #c5e0f7; border: 1px solid #8ec6f2; }
.sep { flex: none; width: 1px; height: 18px; margin: 0 3px; background: #d4d4d4; }
.brk { flex: none; width: 11px; align-self: stretch; border-left: 1px solid #d8d8d8; }
.brk::after { content: ""; display: block; width: 2px; height: 18px; margin: 4px; border-left: 2px dotted #c0c0c0; }
.more { margin-left: auto; padding: 0 4px; font-size: 14px; color: #555; }
.loadcase { flex: none; display: flex; align-items: center; width: 271px; height: 21px; padding: 0 4px 0 5px; background: #e6e6f0; }
.loadcase b { width: 30px; height: 14px; line-height: 14px; background: #000; color: #fff; font-weight: 400; }
.loadcase i { width: 11px; height: 11px; margin: 0 5px 0 3px; background: #c0c0c0; }
.loadcase span { width: 50px; text-align: left; border-right: 1px solid #fff; }
.loadcase em { font-style: normal; margin-left: 6px; }
.loadcase svg { margin-left: auto; }
.step { flex: none; width: 16px; height: 21px; background: #e6e6f0; display: grid; place-items: center; }
.step svg { width: 10px; height: 10px; }
.step.off { background: #cdcdcd; }
.pick { flex: none; display: flex; align-items: center; height: 21px; background: #e6e6f0; padding: 0 4px 0 5px; }
.pick select { flex: 1; appearance: none; outline: 0; margin-left: 3px; }
.cspick { width: 137px; }
.cspick > i { width: 11px; height: 11px; margin-right: 1px; background: #ccffff; }

.work { flex: 1; display: flex; gap: 3px; min-height: 0; }
.dockhead { display: flex; align-items: center; justify-content: flex-end; gap: 9px; height: 21px; padding: 0 6px; background: #d7e4f1; color: #333; }
.dockhead h2 { margin-right: auto; font-size: 12px; font-weight: 600; color: #46505c; }
.dockhead button svg { width: 12px; height: 12px; }
.navigator { flex: none; width: 272px; display: flex; flex-direction: column; }
.tree { flex: 1; list-style: none; margin: 1px 0 0 1px; border: 2px solid #c8c8d4; border-bottom-width: 1px; background: #fff; overflow: hidden; }
.tree li { display: flex; align-items: center; height: 18px; white-space: nowrap; }
.tree .ico { width: 16px; height: 16px; margin-left: 6px; }
.tree .chv { width: 16px; height: 16px; }
.tree span { padding-left: 5px; }
.tree b { font-weight: 600; }
.tree .l0 .ico { margin-left: 3px; height: 12px; }
.l1 { padding-left: 1px; }
.l2 { padding-left: 21px; }
.l3 { padding-left: 41px; }
.tree .sel { background: linear-gradient(90deg, transparent 60px, #cce6fb 60px); }
.navtabs { display: flex; height: 27px; margin-left: 1px; border: 2px solid #c8c8d4; border-top: 0; }
.navtabs button { width: 38px; height: 24px; display: grid; place-items: center; background: #ececec; border: 1px solid #c8c8d4; border-top: 0; }
.navtabs .cur { background: #fff; height: 26px; border: 0; }
.navtabs svg { width: 17px; height: 17px; }

.right { flex: 1; min-width: 0; display: flex; flex-direction: column; }
.view { flex: 1; display: flex; justify-content: flex-end; padding-top: 3px; background: #fff; overflow: hidden; }
.scene { width: 480px; height: 470px; margin-right: -1px; }
.cubetext { font: 700 38px "Open Sans", sans-serif; }
.tables { margin-top: 4px; }
.submenu { height: 20px; }
.tbar2 { display: flex; align-items: center; height: 28px; padding-left: 3px; padding-bottom: 2px; border-top: 1px solid #dcdcdc; }
.tbar2 .last { width: 28px; border-left-color: #d8d8d8; border-right-color: #d8d8d8; }
.p1 { width: 201px; }
.p2 { width: 270px; }
.gridwrap { display: flex; align-items: flex-start; height: 142px; margin-left: 1px; border-top: 1px solid #c8c8d8; border-left: 1px solid #c8c8d8; background: #fff; }
.mats { flex: 1; table-layout: fixed; width: 100%; }
.c60 { width: 60px; } .c85 { width: 85px; } .c9 { width: 9px; } .c100 { width: 100px; } .c200 { width: 200px; }
.mats td, .mats th { padding: 0; height: 16px; line-height: 15px; border-right: 1px solid #d8d8d8; border-bottom: 1px solid #dcdcdc; font-weight: 400; white-space: nowrap; }
.mats .strip td { height: 10px; line-height: 8px; background: #e0e0e0; border-color: #fff; }
.mats thead th { height: 32px; line-height: 15px; background: #f0f0f0; vertical-align: bottom; border-bottom-color: #c4c4c4; }
.mats thead .two { line-height: 13px; padding-bottom: 1px; }
.mats tbody th { background: #e0e0e0; border-bottom-color: #fff; }
.mats thead .rh { background: #ececec; }
.mats .n { text-align: right; padding-right: 4px; }
.mats .n, .mats .y { background: #f8f9f3; }
.sw { display: inline-block; width: 11px; height: 11px; margin: 0 5px 0 4px; vertical-align: -1px; }
.cyan { background: #ccffff; }
.orange { background: #e87532; }
.vbar { flex: none; width: 17px; align-self: stretch; display: flex; flex-direction: column; align-items: center; background: #f0f0f0; }
.vbar svg, .hbar svg { width: 10px; height: 10px; margin: 4px 3px; }
.vbar i { width: 15px; background: #cdcdcd; height: 64px; }
.vbar .end { margin-top: auto; }
.hbar { display: flex; align-items: center; height: 16px; margin: 0 17px 0 2px; background: #f0f0f0; }
.hbar i { width: 1152px; height: 16px; background: #cdcdcd; }
.hbar .end { margin-left: auto; }
.sheets { display: flex; height: 23px; margin-left: 1px; border-top: 1px solid #c8c8d8; }
.pager { display: flex; align-items: center; width: 126px; padding: 0 4px 0 3px; justify-content: space-between; }
.pager svg { width: 10px; height: 10px; }
.pager span { padding: 0 8px 0 10px; }
.sheets > button { min-width: 61px; padding: 0 7px; height: 20px; background: #ececec; border: solid #c8c8d4; border-width: 0 1px 1px; }
.sheets > .cur { height: 22px; min-width: 63px; background: #fff; }

.status { display: flex; align-items: center; justify-content: flex-end; height: 23px; padding-top: 1px; }
.status button { height: 19px; padding: 0 4px; border: 1px solid transparent; }
.status .in { background: #ececec; border-color: #b8b8b8 #fff #fff #b8b8b8; }
.status span { height: 19px; line-height: 19px; padding-left: 5px; border-left: 1px solid #d0d0d0; white-space: nowrap; }
.w89 { width: 89px; } .w106 { width: 106px; } .w156 { width: 156px; } .w66 { width: 66px; } .w76 { width: 76px; } .w8 { width: 9px; }
.status svg { align-self: flex-end; }

.dialog { position: absolute; left: 128px; top: 202px; width: 1052px; height: 766px; display: flex; flex-direction: column; border: 1px solid #666; background: #fff; box-shadow: 0 6px 20px rgba(0, 0, 0, .45); }
.dtitle { display: flex; align-items: center; height: 30px; padding-left: 8px; }
.dtitle h2 { margin: 0 auto 0 5px; }
.dtitle button { width: 46px; height: 30px; display: grid; place-items: center; }
.dbody { flex: 1; display: flex; gap: 10px; padding: 9px; padding-bottom: 8px; background: #d0d0d6; min-height: 0; }
.panel { background: #fff; }
h3 { font-weight: 600; color: #5a6e96; height: 18px; line-height: 18px; padding-left: 5px; }
.lister { flex: none; width: 253px; display: flex; flex-direction: column; }
.items { flex: 1; margin: 1px 1px 4px; width: 251px; }
.items td { height: 18px; padding: 0; border-right: 1px solid #e8e8e8; }
.items .fill, .items .fill td { height: 100%; }
.items td:last-child { border: 0; padding-left: 3px; }
.items .sel td { background: #cde8fc; }
.items .k { width: 22px; }
.items .k i { display: block; width: 11px; height: 11px; margin-left: 3px; background: #8ad4f4; }
.items .n { width: 12px; text-align: right; padding-right: 2px; }
.btns { display: flex; gap: 3px; padding: 0 5px 4px; }
.sq { flex: none; width: 25px; height: 21px; display: grid; place-items: center; background: #cce4f7; }
.sq svg { width: 18px; height: 18px; }
.dis { background: #e5e5e5; }
.gap { margin-left: 7px; }
.push { margin-left: auto; }
.detail { flex: 1; display: flex; flex-direction: column; min-width: 0; }
.heads { display: flex; gap: 10px; }
.heads .panel { height: 47px; }
.hno { width: 60px; padding: 0 5px; } .hname { width: 379px; padding: 0 5px; } .hgen { flex: 1; padding: 0 5px; }
.heads h3 { height: 22px; line-height: 18px; padding: 0; }
input { height: 20px; width: 100%; background: #e6e6f0; padding: 0 5px; outline: 0; }
.num { text-align: right; }
.ro { background: #e5e5e5; }
.line { display: flex; gap: 5px; }
.line input { flex: 1; min-width: 0; }
.tabs { display: flex; align-items: flex-end; height: 32px; }
.tabs button { width: 61px; height: 20px; padding-top: 2px; background: #dcdcdc; }
.tabs .cur { width: 67px; height: 22px; background: #ebebeb; }
.content { flex: 1; display: flex; gap: 10px; padding: 9px 9px 8px; background: #ebebeb; }
.col { width: 440px; display: flex; flex-direction: column; gap: 10px; }
.nodes { display: flex; height: 233px; margin-bottom: 4px; }
.clip { flex: 1; overflow: hidden; }
.clip table { width: 100%; }
.clip th, .clip td { height: 16px; line-height: 15px; padding: 0; font-weight: 400; border-bottom: 1px solid #dcdcdc; }
.clip thead th { height: 19px; line-height: 18px; background: #e0e0e0; border-color: #fff; border-right: 1px solid #fff; }
.clip tbody th { width: 60px; background: #e0e0e0; border-color: #fff; border-right: 1px solid #fff; }
.clip thead th:first-child { width: 60px; }
.clip td { padding-left: 4px; border-right: 1px solid #dcdcdc; }
.clip .sel th, .clip .sel td { background: #0078d7; color: #fff; }
.clip .sel td { outline: 1px dotted #e8a060; outline-offset: -2px; }
.nodes .vbar { margin: 0 1px; width: 15px; }
.nodes .vbar i { height: 184px; }
.remove { height: 139px; padding: 0 5px; }
.remove h3, .settings h3 { padding: 0; margin-bottom: 8px; }
.remove > label, .settings > label { display: block; height: 20px; line-height: 18px; }
.remove .line { margin-bottom: 15px; }
.settings { flex: 1; padding: 0 5px; }
.settings select { display: block; appearance: none; width: 258px; height: 21px; padding-left: 5px; }
.preview { flex: 1; display: flex; align-items: flex-end; padding: 5px; }
.dfoot { display: flex; align-items: center; height: 42px; padding: 0 10px 0 9px; }
.swatch { width: 21px; height: 21px; margin: 0 3px 0 10px; background: #ccffff; border: 1px solid #000; }
.sp { margin-left: 10px; }
.acts { margin-left: auto; display: flex; gap: 10px; }
.acts button { width: 81px; height: 21px; background: #e1e1e1; border: 1px solid #adadad; line-height: 19px; }
.dgrip { position: absolute; right: 2px; bottom: 2px; width: 10px; height: 10px; }
```
